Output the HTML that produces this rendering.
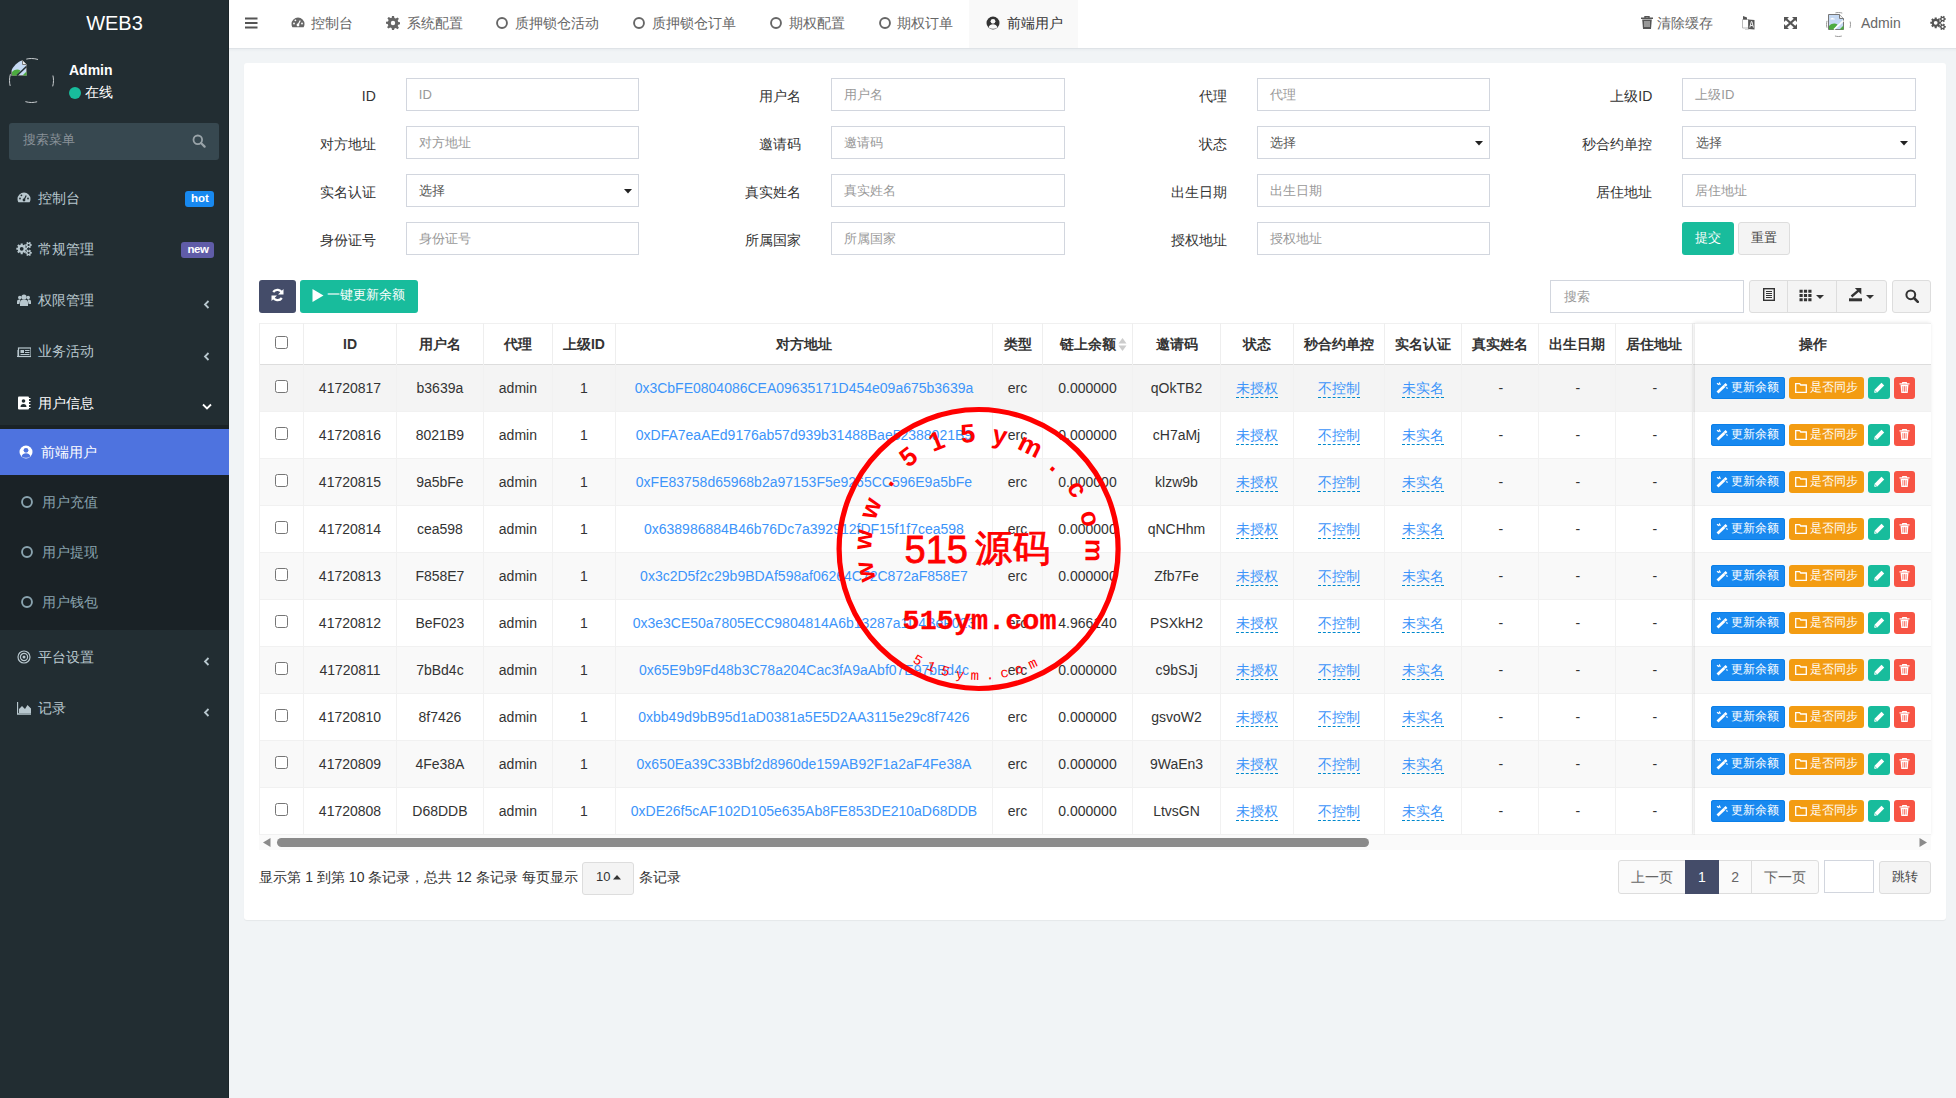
<!DOCTYPE html>
<html><head><meta charset="utf-8"><title>前端用户</title>
<style>
html,body{margin:0;padding:0;}
body{width:1956px;height:1098px;overflow:hidden;position:relative;background:#f1f4f6;font-family:"Liberation Sans",sans-serif;}
.b{position:absolute;}
.t{position:absolute;white-space:nowrap;}
.cb{width:13px;height:13px;border:1px solid #767676;border-radius:2.5px;box-sizing:border-box;background:#fff;}
.ed{border-bottom:1px dashed #0088cc;padding-bottom:1px;}
</style></head><body>
<div class="b" style="left:0px;top:0px;width:229px;height:1098px;background:#222d32;"></div>
<div class="b" style="left:228px;top:0px;width:1px;height:1098px;background:#1c2529;"></div>
<div class="t" style="left:0px;top:11.60px;font-size:20px;line-height:22.34px;color:#fff;font-weight:normal;width:229px;text-align:center;">WEB3</div>
<svg class="b" style="left:9px;top:58px" width="45" height="45" viewBox="0 0 45 45"><defs><clipPath id="av"><circle cx="22.5" cy="22.5" r="22.5"/></clipPath></defs><g clip-path="url(#av)"><g transform="translate(2 2)"><path d="M.5 .5h11l4 4v11H.5z" fill="#c5d9f3" stroke="#777" stroke-width="1"/><path d="M11.5 .5v4h4" fill="#eee" stroke="#777" stroke-width="1"/><path d="M1 15.5V12c3-3 6-3 8.5-1.5L6 15.5z" fill="#4cab3f"/><path d="M11.5 15.5l4-4v4z" fill="#4cab3f"/><path d="M6 15.5l9.5-9" stroke="#222d32" stroke-width="1.6"/></g></g><circle cx="22.5" cy="22.5" r="22" fill="none" stroke="#c8cccf" stroke-width="1" stroke-dasharray="12 22.56" stroke-dashoffset="6"/></svg>
<div class="t" style="left:69px;top:63.33px;font-size:14px;line-height:15.64px;color:#fff;font-weight:bold;">Admin</div>
<div class="b" style="left:69px;top:87px;width:12px;height:12px;background:#18bc9c;border-radius:50%;"></div>
<div class="t" style="left:85px;top:84.83px;font-size:14px;line-height:15.64px;color:#fff;font-weight:normal;">在线</div>
<div class="b" style="left:9px;top:123px;width:210px;height:37px;background:#374850;border-radius:3px;"></div>
<div class="t" style="left:23px;top:133.24px;font-size:13px;line-height:14.52px;color:#8a9299;font-weight:normal;">搜索菜单</div>
<svg class="b" style="left:192px;top:134px" width="14" height="14" viewBox="0 0 14 14"><circle cx="5.8" cy="5.8" r="4.3" fill="none" stroke="#9aa4a9" stroke-width="1.8"/><path d="M9 9l3.6 3.6" stroke="#9aa4a9" stroke-width="2.2" stroke-linecap="round"/></svg>
<svg class="b" style="left:17px;top:191px" width="14" height="14" viewBox="0 0 14 14"><path d="M7 1.5a6.5 6.5 0 0 0-6.5 6.5c0 1.2.3 2.3.9 3.3h11.2c.6-1 .9-2.1.9-3.3A6.5 6.5 0 0 0 7 1.5z" fill="#b8c7ce"/><circle cx="7" cy="9" r="1.4" fill="#222d32"/><path d="M7 9l2.2-4.5" stroke="#222d32" stroke-width="1.2"/><circle cx="3" cy="7.5" r=".9" fill="#222d32"/><circle cx="4.4" cy="4.3" r=".9" fill="#222d32"/><circle cx="11" cy="7.5" r=".9" fill="#222d32"/></svg>
<div class="t" style="left:38px;top:190.73px;font-size:14px;line-height:15.64px;color:#b8c7ce;font-weight:normal;">控制台</div>
<div class="b" style="left:185px;top:191px;width:29px;height:16px;background:#1889f0;border-radius:3px;"></div>
<div class="t" style="left:185.5px;top:191.89px;font-size:11.5px;line-height:12.85px;color:#fff;font-weight:bold;width:29px;text-align:center;">hot</div>
<svg class="b" style="left:16px;top:241px" width="16" height="16" viewBox="0 0 16 16"><path fill-rule="evenodd" fill="#b8c7ce" d="M9.66 6.75 L11.09 6.73 L11.09 8.87 L9.66 8.85 L9.25 9.86 L10.27 10.86 L8.76 12.37 L7.76 11.35 L6.75 11.76 L6.77 13.19 L4.63 13.19 L4.65 11.76 L3.64 11.35 L2.64 12.37 L1.13 10.86 L2.15 9.86 L1.74 8.85 L0.31 8.87 L0.31 6.73 L1.74 6.75 L2.15 5.74 L1.13 4.74 L2.64 3.23 L3.64 4.25 L4.65 3.84 L4.63 2.41 L6.77 2.41 L6.75 3.84 L7.76 4.25 L8.76 3.23 L10.27 4.74 L9.25 5.74Z M7.60 7.80 A1.9 1.9 0 1 0 3.80 7.80 A1.9 1.9 0 1 0 7.60 7.80Z M14.86 3.19 L15.79 3.15 L15.79 4.85 L14.86 4.81 L14.43 5.55 L14.93 6.33 L13.45 7.19 L13.03 6.36 L12.17 6.36 L11.75 7.19 L10.27 6.33 L10.77 5.55 L10.34 4.81 L9.41 4.85 L9.41 3.15 L10.34 3.19 L10.77 2.45 L10.27 1.67 L11.75 0.81 L12.17 1.64 L13.03 1.64 L13.45 0.81 L14.93 1.67 L14.43 2.45Z M13.70 4.00 A1.1 1.1 0 1 0 11.50 4.00 A1.1 1.1 0 1 0 13.70 4.00Z M14.86 10.99 L15.79 10.95 L15.79 12.65 L14.86 12.61 L14.43 13.35 L14.93 14.13 L13.45 14.99 L13.03 14.16 L12.17 14.16 L11.75 14.99 L10.27 14.13 L10.77 13.35 L10.34 12.61 L9.41 12.65 L9.41 10.95 L10.34 10.99 L10.77 10.25 L10.27 9.47 L11.75 8.61 L12.17 9.44 L13.03 9.44 L13.45 8.61 L14.93 9.47 L14.43 10.25Z M13.70 11.80 A1.1 1.1 0 1 0 11.50 11.80 A1.1 1.1 0 1 0 13.70 11.80Z"/></svg>
<div class="t" style="left:38px;top:241.98px;font-size:14px;line-height:15.64px;color:#b8c7ce;font-weight:normal;">常规管理</div>
<div class="b" style="left:181px;top:242px;width:33px;height:16px;background:#605ca8;border-radius:3px;"></div>
<div class="t" style="left:181.5px;top:242.89px;font-size:11.5px;line-height:12.85px;color:#fff;font-weight:bold;width:33px;text-align:center;letter-spacing:-0.4px;">new</div>
<svg class="b" style="left:17px;top:293px" width="14" height="14" viewBox="0 0 14 14"><circle cx="7" cy="4" r="2.6" fill="#b8c7ce"/><circle cx="2.8" cy="4.6" r="1.8" fill="#b8c7ce"/><circle cx="11.2" cy="4.6" r="1.8" fill="#b8c7ce"/><path d="M3 13v-3.5c0-1.8 1.5-3 4-3s4 1.2 4 3V13z" fill="#b8c7ce"/><path d="M0 11V8.6c0-1.3.9-2 2.4-2h1L2.4 11z" fill="#b8c7ce"/><path d="M14 11V8.6c0-1.3-.9-2-2.4-2h-1l1 4.4z" fill="#b8c7ce"/></svg>
<div class="t" style="left:38px;top:293.23px;font-size:14px;line-height:15.64px;color:#b8c7ce;font-weight:normal;">权限管理</div>
<svg class="b" style="left:203px;top:300px" width="7" height="9" viewBox="0 0 7 9"><path d="M5.5 1L2 4.5 5.5 8" fill="none" stroke="#b8c7ce" stroke-width="1.8"/></svg>
<svg class="b" style="left:17px;top:345px" width="14" height="14" viewBox="0 0 14 14"><rect x="1.5" y="3" width="12.5" height="8.5" fill="none" stroke="#b8c7ce" stroke-width="1.2"/><path d="M0 5v6.5h1.5" fill="none" stroke="#b8c7ce" stroke-width="1.1"/><rect x="3.5" y="5" width="3.5" height="3" fill="#b8c7ce"/><path d="M8 5.5h4.5M8 7.5h4.5M3.5 9.5h9" stroke="#b8c7ce" stroke-width="1"/></svg>
<div class="t" style="left:38px;top:344.48px;font-size:14px;line-height:15.64px;color:#b8c7ce;font-weight:normal;">业务活动</div>
<svg class="b" style="left:203px;top:352px" width="7" height="9" viewBox="0 0 7 9"><path d="M5.5 1L2 4.5 5.5 8" fill="none" stroke="#b8c7ce" stroke-width="1.8"/></svg>
<svg class="b" style="left:17px;top:396px" width="14" height="14" viewBox="0 0 14 14"><rect x="1" y="0.5" width="11" height="13" rx="1" fill="#fff"/><path d="M12 2.5h1.5M12 5.5h1.5M12 8.5h1.5M12 11.5h1.5" stroke="#fff" stroke-width="1.2"/><circle cx="6.5" cy="5" r="1.8" fill="#222d32"/><path d="M3.5 11c0-2 1.2-3 3-3s3 1 3 3z" fill="#222d32"/></svg>
<div class="t" style="left:38px;top:395.73px;font-size:14px;line-height:15.64px;color:#fff;font-weight:normal;">用户信息</div>
<svg class="b" style="left:202px;top:403px" width="10" height="7" viewBox="0 0 10 7"><path d="M1 1.5l4 4 4-4" fill="none" stroke="#fff" stroke-width="1.8"/></svg>
<div class="b" style="left:0px;top:425px;width:229px;height:204.8px;background:#1a2226;"></div>
<div class="b" style="left:0px;top:428.7px;width:229px;height:46.2px;background:#4e73df;"></div>
<svg class="b" style="left:19px;top:445px" width="14" height="14" viewBox="0 0 14 14"><circle cx="7" cy="7" r="6.5" fill="#fff"/><circle cx="7" cy="5.3" r="2.4" fill="#4e73df"/><path d="M2.5 11.2c.8-2 2.4-3 4.5-3s3.7 1 4.5 3A5.4 5.4 0 0 1 7 12.8a5.4 5.4 0 0 1-4.5-1.6z" fill="#4e73df"/></svg>
<div class="t" style="left:41px;top:444.73px;font-size:14px;line-height:15.64px;color:#fff;font-weight:normal;">前端用户</div>
<svg class="b" style="left:21px;top:496px" width="12" height="12" viewBox="0 0 12 12"><circle cx="6" cy="6" r="4.95" fill="none" stroke="#8aa4af" stroke-width="1.9"/></svg>
<div class="t" style="left:41.5px;top:494.93px;font-size:14px;line-height:15.64px;color:#8aa4af;font-weight:normal;">用户充值</div>
<svg class="b" style="left:21px;top:546px" width="12" height="12" viewBox="0 0 12 12"><circle cx="6" cy="6" r="4.95" fill="none" stroke="#8aa4af" stroke-width="1.9"/></svg>
<div class="t" style="left:41.5px;top:545.13px;font-size:14px;line-height:15.64px;color:#8aa4af;font-weight:normal;">用户提现</div>
<svg class="b" style="left:21px;top:596px" width="12" height="12" viewBox="0 0 12 12"><circle cx="6" cy="6" r="4.95" fill="none" stroke="#8aa4af" stroke-width="1.9"/></svg>
<div class="t" style="left:41.5px;top:595.33px;font-size:14px;line-height:15.64px;color:#8aa4af;font-weight:normal;">用户钱包</div>
<svg class="b" style="left:17px;top:650px" width="14" height="14" viewBox="0 0 14 14"><circle cx="7" cy="7" r="6" fill="none" stroke="#b8c7ce" stroke-width="1.2"/><circle cx="7" cy="7" r="3.6" fill="none" stroke="#b8c7ce" stroke-width="1.2"/><circle cx="7" cy="7" r="1.5" fill="#b8c7ce"/></svg>
<div class="t" style="left:38px;top:650.13px;font-size:14px;line-height:15.64px;color:#b8c7ce;font-weight:normal;">平台设置</div>
<svg class="b" style="left:203px;top:657px" width="7" height="9" viewBox="0 0 7 9"><path d="M5.5 1L2 4.5 5.5 8" fill="none" stroke="#b8c7ce" stroke-width="1.8"/></svg>
<svg class="b" style="left:17px;top:701px" width="14" height="14" viewBox="0 0 14 14"><path d="M.5 1v12h14" fill="none" stroke="#b8c7ce" stroke-width="1.3"/><path d="M2 12V8l3-3 3 3 2.5-4L14 7.5V12z" fill="#b8c7ce"/></svg>
<div class="t" style="left:38px;top:701.38px;font-size:14px;line-height:15.64px;color:#b8c7ce;font-weight:normal;">记录</div>
<svg class="b" style="left:203px;top:708px" width="7" height="9" viewBox="0 0 7 9"><path d="M5.5 1L2 4.5 5.5 8" fill="none" stroke="#b8c7ce" stroke-width="1.8"/></svg>
<div class="b" style="left:229px;top:0px;width:1727px;height:48px;background:#fff;"></div>
<div class="b" style="left:229px;top:48px;width:1727px;height:1px;background:#dfe3e7;"></div>
<div class="b" style="left:229px;top:49px;width:1727px;height:3px;background:linear-gradient(#e9edf0,#f1f4f6);"></div>
<svg class="b" style="left:245px;top:17px" width="13" height="12" viewBox="0 0 13 12"><path d="M0 1.5h12.5M0 6h12.5M0 10.5h12.5" stroke="#555" stroke-width="2"/></svg>
<div class="b" style="left:969px;top:0px;width:109px;height:48px;background:#f9f9f9;"></div>
<svg class="b" style="left:291px;top:16px" width="14" height="14" viewBox="0 0 14 14"><path d="M7 1.5a6.5 6.5 0 0 0-6.5 6.5c0 1.2.3 2.3.9 3.3h11.2c.6-1 .9-2.1.9-3.3A6.5 6.5 0 0 0 7 1.5z" fill="#666"/><circle cx="7" cy="9" r="1.4" fill="#fff"/><path d="M7 9l2.2-4.5" stroke="#fff" stroke-width="1.2"/><circle cx="3" cy="7.5" r=".9" fill="#fff"/><circle cx="4.4" cy="4.3" r=".9" fill="#fff"/><circle cx="11" cy="7.5" r=".9" fill="#fff"/></svg>
<div class="t" style="left:311.4px;top:15.83px;font-size:14px;line-height:15.64px;color:#666;font-weight:normal;">控制台</div>
<svg class="b" style="left:386px;top:16px" width="14" height="14" viewBox="0 0 14 14"><path d="M6 0h2l.4 2 1.4.6 1.7-1.2 1.4 1.4-1.2 1.7.6 1.4 2 .4v2l-2 .4-.6 1.4 1.2 1.7-1.4 1.4-1.7-1.2-1.4.6L8 14H6l-.4-2-1.4-.6-1.7 1.2-1.4-1.4 1.2-1.7L1.7 8 0 7.8v-2l2-.4.6-1.4-1.2-1.7 1.4-1.4 1.7 1.2L5.6 2z" fill="#666"/><circle cx="7" cy="7" r="2.2" fill="#fff"/></svg>
<div class="t" style="left:406.5px;top:15.83px;font-size:14px;line-height:15.64px;color:#666;font-weight:normal;">系统配置</div>
<svg class="b" style="left:496px;top:17px" width="12" height="12" viewBox="0 0 12 12"><circle cx="6" cy="6" r="4.95" fill="none" stroke="#666" stroke-width="1.9"/></svg>
<div class="t" style="left:515px;top:15.83px;font-size:14px;line-height:15.64px;color:#666;font-weight:normal;">质押锁仓活动</div>
<svg class="b" style="left:633px;top:17px" width="12" height="12" viewBox="0 0 12 12"><circle cx="6" cy="6" r="4.95" fill="none" stroke="#666" stroke-width="1.9"/></svg>
<div class="t" style="left:652px;top:15.83px;font-size:14px;line-height:15.64px;color:#666;font-weight:normal;">质押锁仓订单</div>
<svg class="b" style="left:770px;top:17px" width="12" height="12" viewBox="0 0 12 12"><circle cx="6" cy="6" r="4.95" fill="none" stroke="#666" stroke-width="1.9"/></svg>
<div class="t" style="left:788.8px;top:15.83px;font-size:14px;line-height:15.64px;color:#666;font-weight:normal;">期权配置</div>
<svg class="b" style="left:879px;top:17px" width="12" height="12" viewBox="0 0 12 12"><circle cx="6" cy="6" r="4.95" fill="none" stroke="#666" stroke-width="1.9"/></svg>
<div class="t" style="left:897px;top:15.83px;font-size:14px;line-height:15.64px;color:#666;font-weight:normal;">期权订单</div>
<svg class="b" style="left:986px;top:16px" width="14" height="14" viewBox="0 0 14 14"><circle cx="7" cy="7" r="6.5" fill="#333"/><circle cx="7" cy="5.3" r="2.4" fill="#f9f9f9"/><path d="M2.5 11.2c.8-2 2.4-3 4.5-3s3.7 1 4.5 3A5.4 5.4 0 0 1 7 12.8a5.4 5.4 0 0 1-4.5-1.6z" fill="#f9f9f9"/></svg>
<div class="t" style="left:1007px;top:15.83px;font-size:14px;line-height:15.64px;color:#333;font-weight:normal;">前端用户</div>
<svg class="b" style="left:1641px;top:16px" width="12" height="13" viewBox="0 0 12 13"><path d="M0 2.2h12M4 2V.6h4V2" fill="none" stroke="#555" stroke-width="1.4"/><path d="M1.2 3.5h9.6L10 13H2z" fill="#555"/><path d="M4 5v6M6 5v6M8 5v6" stroke="#fff" stroke-width=".8"/></svg>
<div class="t" style="left:1656.7px;top:15.83px;font-size:14px;line-height:15.64px;color:#666;font-weight:normal;">清除缓存</div>
<svg class="b" style="left:1742px;top:16px" width="13" height="14" viewBox="0 0 13 14"><path d="M.5 3.5h6v8.5H.5z" fill="#fff" stroke="#bbb" stroke-width="1"/><path d="M1 0l4 1.5v2H1z" fill="#555"/><path d="M6.2 3.5L12.5 4v9.5L6.2 13z" fill="#555"/><path d="M7.8 11.5l1.5-6h.6l1.5 6M8.5 9.5h2.3" stroke="#fff" stroke-width=".9" fill="none"/><path d="M3 13.5h4" stroke="#ccc" stroke-width=".8"/></svg>
<svg class="b" style="left:1784px;top:17px" width="13" height="12" viewBox="0 0 13 12"><path d="M0 0h5L0 5zM13 0H8l5 5zM0 12h5L0 7zM13 12H8l5-5z" fill="#555"/><path d="M1.5 1.5l10 9M11.5 1.5l-10 9" stroke="#555" stroke-width="2.3"/></svg>
<svg class="b" style="left:1826px;top:12px" width="25" height="25" viewBox="0 0 25 25"><circle cx="12.5" cy="12.5" r="12" fill="none" stroke="#999" stroke-width="1" stroke-dasharray="7 11.85" stroke-dashoffset="3.5"/></svg>
<svg class="b" style="left:1828px;top:14px" width="16" height="16" viewBox="0 0 16 16"><path d="M.5 .5h11l4 4v11H.5z" fill="#c5d9f3" stroke="#777" stroke-width="1"/><path d="M11.5 .5v4h4" fill="#eee" stroke="#777" stroke-width="1"/><path d="M3 4.5c.5-1 2-1 2.5 0 .8-.3 1.5.3 1.3 1H2.5c-.3-.6 0-1 .5-1z" fill="#fff"/><path d="M1 15.5V12c3-3 6-3 8.5-1.5L6 15.5z" fill="#4cab3f"/><path d="M11.5 15.5l4-4v4z" fill="#4cab3f"/><path d="M6 15.5l9.5-9" stroke="#fff" stroke-width="1.6"/></svg>
<div class="t" style="left:1861px;top:15.83px;font-size:14px;line-height:15.64px;color:#666;font-weight:normal;">Admin</div>
<svg class="b" style="left:1930px;top:15px" width="16" height="16" viewBox="0 0 16 16"><path fill-rule="evenodd" fill="#555" d="M9.66 6.75 L11.09 6.73 L11.09 8.87 L9.66 8.85 L9.25 9.86 L10.27 10.86 L8.76 12.37 L7.76 11.35 L6.75 11.76 L6.77 13.19 L4.63 13.19 L4.65 11.76 L3.64 11.35 L2.64 12.37 L1.13 10.86 L2.15 9.86 L1.74 8.85 L0.31 8.87 L0.31 6.73 L1.74 6.75 L2.15 5.74 L1.13 4.74 L2.64 3.23 L3.64 4.25 L4.65 3.84 L4.63 2.41 L6.77 2.41 L6.75 3.84 L7.76 4.25 L8.76 3.23 L10.27 4.74 L9.25 5.74Z M7.60 7.80 A1.9 1.9 0 1 0 3.80 7.80 A1.9 1.9 0 1 0 7.60 7.80Z M14.86 3.19 L15.79 3.15 L15.79 4.85 L14.86 4.81 L14.43 5.55 L14.93 6.33 L13.45 7.19 L13.03 6.36 L12.17 6.36 L11.75 7.19 L10.27 6.33 L10.77 5.55 L10.34 4.81 L9.41 4.85 L9.41 3.15 L10.34 3.19 L10.77 2.45 L10.27 1.67 L11.75 0.81 L12.17 1.64 L13.03 1.64 L13.45 0.81 L14.93 1.67 L14.43 2.45Z M13.70 4.00 A1.1 1.1 0 1 0 11.50 4.00 A1.1 1.1 0 1 0 13.70 4.00Z M14.86 10.99 L15.79 10.95 L15.79 12.65 L14.86 12.61 L14.43 13.35 L14.93 14.13 L13.45 14.99 L13.03 14.16 L12.17 14.16 L11.75 14.99 L10.27 14.13 L10.77 13.35 L10.34 12.61 L9.41 12.65 L9.41 10.95 L10.34 10.99 L10.77 10.25 L10.27 9.47 L11.75 8.61 L12.17 9.44 L13.03 9.44 L13.45 8.61 L14.93 9.47 L14.43 10.25Z M13.70 11.80 A1.1 1.1 0 1 0 11.50 11.80 A1.1 1.1 0 1 0 13.70 11.80Z"/></svg>
<div class="b" style="left:244px;top:63px;width:1702px;height:857px;background:#fff;border-radius:3px;box-shadow:0 1px 1px rgba(0,0,0,0.05);"></div>
<div class="t" style="left:175.82999999999998px;top:89.33px;font-size:14px;line-height:15.64px;color:#333;font-weight:normal;width:200px;text-align:right;">ID</div>
<div class="b" style="left:405.83px;top:78px;width:233.67px;height:33px;border:1px solid #d2d6de;box-sizing:border-box;background:#fff;"></div>
<div class="t" style="left:418.83px;top:87.73px;font-size:13px;line-height:14.52px;color:#999;font-weight:normal;">ID</div>
<div class="t" style="left:601.3299999999999px;top:89.33px;font-size:14px;line-height:15.64px;color:#333;font-weight:normal;width:200px;text-align:right;">用户名</div>
<div class="b" style="left:831.33px;top:78px;width:233.67px;height:33px;border:1px solid #d2d6de;box-sizing:border-box;background:#fff;"></div>
<div class="t" style="left:844.3299999999999px;top:87.73px;font-size:13px;line-height:14.52px;color:#999;font-weight:normal;">用户名</div>
<div class="t" style="left:1026.83px;top:89.33px;font-size:14px;line-height:15.64px;color:#333;font-weight:normal;width:200px;text-align:right;">代理</div>
<div class="b" style="left:1256.83px;top:78px;width:233.67px;height:33px;border:1px solid #d2d6de;box-sizing:border-box;background:#fff;"></div>
<div class="t" style="left:1269.83px;top:87.73px;font-size:13px;line-height:14.52px;color:#999;font-weight:normal;">代理</div>
<div class="t" style="left:1452.33px;top:89.33px;font-size:14px;line-height:15.64px;color:#333;font-weight:normal;width:200px;text-align:right;">上级ID</div>
<div class="b" style="left:1682.33px;top:78px;width:233.67px;height:33px;border:1px solid #d2d6de;box-sizing:border-box;background:#fff;"></div>
<div class="t" style="left:1695.33px;top:87.73px;font-size:13px;line-height:14.52px;color:#999;font-weight:normal;">上级ID</div>
<div class="t" style="left:175.82999999999998px;top:137.33px;font-size:14px;line-height:15.64px;color:#333;font-weight:normal;width:200px;text-align:right;">对方地址</div>
<div class="b" style="left:405.83px;top:126px;width:233.67px;height:33px;border:1px solid #d2d6de;box-sizing:border-box;background:#fff;"></div>
<div class="t" style="left:418.83px;top:135.74px;font-size:13px;line-height:14.52px;color:#999;font-weight:normal;">对方地址</div>
<div class="t" style="left:601.3299999999999px;top:137.33px;font-size:14px;line-height:15.64px;color:#333;font-weight:normal;width:200px;text-align:right;">邀请码</div>
<div class="b" style="left:831.33px;top:126px;width:233.67px;height:33px;border:1px solid #d2d6de;box-sizing:border-box;background:#fff;"></div>
<div class="t" style="left:844.3299999999999px;top:135.74px;font-size:13px;line-height:14.52px;color:#999;font-weight:normal;">邀请码</div>
<div class="t" style="left:1026.83px;top:137.33px;font-size:14px;line-height:15.64px;color:#333;font-weight:normal;width:200px;text-align:right;">状态</div>
<div class="b" style="left:1256.83px;top:126px;width:233.67px;height:33px;border:1px solid #d2d6de;box-sizing:border-box;background:#fff;"></div>
<div class="t" style="left:1270.33px;top:135.74px;font-size:13px;line-height:14.52px;color:#555;font-weight:normal;">选择</div>
<svg class="b" style="left:1474.83px;top:141px" width="8" height="5" viewBox="0 0 8 5"><path d="M0 0h8L4 4.5z" fill="#222"/></svg>
<div class="t" style="left:1452.33px;top:137.33px;font-size:14px;line-height:15.64px;color:#333;font-weight:normal;width:200px;text-align:right;">秒合约单控</div>
<div class="b" style="left:1682.33px;top:126px;width:233.67px;height:33px;border:1px solid #d2d6de;box-sizing:border-box;background:#fff;"></div>
<div class="t" style="left:1695.83px;top:135.74px;font-size:13px;line-height:14.52px;color:#555;font-weight:normal;">选择</div>
<svg class="b" style="left:1900.33px;top:141px" width="8" height="5" viewBox="0 0 8 5"><path d="M0 0h8L4 4.5z" fill="#222"/></svg>
<div class="t" style="left:175.82999999999998px;top:185.33px;font-size:14px;line-height:15.64px;color:#333;font-weight:normal;width:200px;text-align:right;">实名认证</div>
<div class="b" style="left:405.83px;top:174px;width:233.67px;height:33px;border:1px solid #d2d6de;box-sizing:border-box;background:#fff;"></div>
<div class="t" style="left:419.33px;top:183.74px;font-size:13px;line-height:14.52px;color:#555;font-weight:normal;">选择</div>
<svg class="b" style="left:623.83px;top:189px" width="8" height="5" viewBox="0 0 8 5"><path d="M0 0h8L4 4.5z" fill="#222"/></svg>
<div class="t" style="left:601.3299999999999px;top:185.33px;font-size:14px;line-height:15.64px;color:#333;font-weight:normal;width:200px;text-align:right;">真实姓名</div>
<div class="b" style="left:831.33px;top:174px;width:233.67px;height:33px;border:1px solid #d2d6de;box-sizing:border-box;background:#fff;"></div>
<div class="t" style="left:844.3299999999999px;top:183.74px;font-size:13px;line-height:14.52px;color:#999;font-weight:normal;">真实姓名</div>
<div class="t" style="left:1026.83px;top:185.33px;font-size:14px;line-height:15.64px;color:#333;font-weight:normal;width:200px;text-align:right;">出生日期</div>
<div class="b" style="left:1256.83px;top:174px;width:233.67px;height:33px;border:1px solid #d2d6de;box-sizing:border-box;background:#fff;"></div>
<div class="t" style="left:1269.83px;top:183.74px;font-size:13px;line-height:14.52px;color:#999;font-weight:normal;">出生日期</div>
<div class="t" style="left:1452.33px;top:185.33px;font-size:14px;line-height:15.64px;color:#333;font-weight:normal;width:200px;text-align:right;">居住地址</div>
<div class="b" style="left:1682.33px;top:174px;width:233.67px;height:33px;border:1px solid #d2d6de;box-sizing:border-box;background:#fff;"></div>
<div class="t" style="left:1695.33px;top:183.74px;font-size:13px;line-height:14.52px;color:#999;font-weight:normal;">居住地址</div>
<div class="t" style="left:175.82999999999998px;top:233.33px;font-size:14px;line-height:15.64px;color:#333;font-weight:normal;width:200px;text-align:right;">身份证号</div>
<div class="b" style="left:405.83px;top:222px;width:233.67px;height:33px;border:1px solid #d2d6de;box-sizing:border-box;background:#fff;"></div>
<div class="t" style="left:418.83px;top:231.74px;font-size:13px;line-height:14.52px;color:#999;font-weight:normal;">身份证号</div>
<div class="t" style="left:601.3299999999999px;top:233.33px;font-size:14px;line-height:15.64px;color:#333;font-weight:normal;width:200px;text-align:right;">所属国家</div>
<div class="b" style="left:831.33px;top:222px;width:233.67px;height:33px;border:1px solid #d2d6de;box-sizing:border-box;background:#fff;"></div>
<div class="t" style="left:844.3299999999999px;top:231.74px;font-size:13px;line-height:14.52px;color:#999;font-weight:normal;">所属国家</div>
<div class="t" style="left:1026.83px;top:233.33px;font-size:14px;line-height:15.64px;color:#333;font-weight:normal;width:200px;text-align:right;">授权地址</div>
<div class="b" style="left:1256.83px;top:222px;width:233.67px;height:33px;border:1px solid #d2d6de;box-sizing:border-box;background:#fff;"></div>
<div class="t" style="left:1269.83px;top:231.74px;font-size:13px;line-height:14.52px;color:#999;font-weight:normal;">授权地址</div>
<div class="b" style="left:1682px;top:222px;width:52px;height:33px;background:#18bc9c;border-radius:3px;"></div>
<div class="t" style="left:1682px;top:231.24px;font-size:13px;line-height:14.52px;color:#fff;font-weight:normal;width:52px;text-align:center;">提交</div>
<div class="b" style="left:1738px;top:222px;width:52px;height:33px;background:#f4f4f4;border:1px solid #ddd;border-radius:3px;box-sizing:border-box;"></div>
<div class="t" style="left:1738px;top:231.24px;font-size:13px;line-height:14.52px;color:#444;font-weight:normal;width:52px;text-align:center;">重置</div>
<div class="b" style="left:259px;top:280px;width:37px;height:33px;background:#444c69;border-radius:3px;"></div>
<svg class="b" style="left:271px;top:288px" width="13" height="14" viewBox="0 0 13 14"><path d="M11 5.2A5 5 0 0 0 2.2 4" fill="none" stroke="#fff" stroke-width="2.2"/><path d="M12.5 1v5.5H7z" fill="#fff"/><path d="M2 8.8A5 5 0 0 0 10.8 10" fill="none" stroke="#fff" stroke-width="2.2"/><path d="M.5 13V7.5H6z" fill="#fff"/></svg>
<div class="b" style="left:300px;top:280px;width:118px;height:33px;background:#18bc9c;border-radius:3px;"></div>
<svg class="b" style="left:312px;top:289px" width="12" height="13" viewBox="0 0 12 13"><path d="M.5 0L11.5 6.5.5 13z" fill="#fff"/></svg>
<div class="t" style="left:326.5px;top:288.24px;font-size:13px;line-height:14.52px;color:#fff;font-weight:normal;">一键更新余额</div>
<div class="b" style="left:1550px;top:280px;width:194px;height:33px;border:1px solid #d2d6de;box-sizing:border-box;background:#fff;"></div>
<div class="t" style="left:1563.5px;top:289.74px;font-size:13px;line-height:14.52px;color:#999;font-weight:normal;">搜索</div>
<div class="b" style="left:1749px;top:280px;width:138px;height:33px;background:#f4f4f4;border:1px solid #ddd;border-radius:3px;box-sizing:border-box;"></div>
<div class="b" style="left:1787px;top:281px;width:1px;height:31px;background:#ddd;"></div>
<div class="b" style="left:1836px;top:281px;width:1px;height:31px;background:#ddd;"></div>
<div class="b" style="left:1892px;top:280px;width:39px;height:33px;background:#f4f4f4;border:1px solid #ddd;border-radius:3px;box-sizing:border-box;"></div>
<svg class="b" style="left:1763px;top:288px" width="12" height="13" viewBox="0 0 12 13"><rect x=".7" y=".7" width="10.6" height="11.6" fill="none" stroke="#333" stroke-width="1.4"/><path d="M3 3.5h6M3 5.5h6M3 7.5h6M3 9.5h6" stroke="#333" stroke-width="1.1"/></svg>
<svg class="b" style="left:1799px;top:289px" width="26" height="13" viewBox="0 0 26 13"><path d="M.5 .8h3.2v3H.5zM4.9 .8h3.2v3H4.9zM9.3 .8h3.2v3H9.3zM.5 4.9h3.2v3.2H.5zM4.9 4.9h3.2v3.2H4.9zM9.3 4.9h3.2v3.2H9.3zM.5 9.2h3.2v3H.5zM4.9 9.2h3.2v3H4.9zM9.3 9.2h3.2v3H9.3z" fill="#333"/><path d="M17 6h8l-4 4z" fill="#333"/></svg>
<svg class="b" style="left:1848px;top:287px" width="27" height="15" viewBox="0 0 27 15"><path d="M1 11.3h13v3H1z" fill="#333"/><path d="M3.5 9.5L11 3.2" stroke="#333" stroke-width="2.4"/><path d="M6.8 1h6.5v6.5z" fill="#333"/><path d="M18 8h8l-4 4z" fill="#333"/></svg>
<svg class="b" style="left:1905px;top:289px" width="14" height="14" viewBox="0 0 14 14"><circle cx="5.8" cy="5.8" r="4.4" fill="none" stroke="#333" stroke-width="2"/><path d="M9 9l3.8 3.8" stroke="#333" stroke-width="2.6" stroke-linecap="round"/></svg>
<div class="b" style="left:259px;top:323px;width:1672px;height:512px;background:#fff;"></div>
<div class="t" style="left:303.5px;top:337.33px;font-size:14px;line-height:15.64px;color:#333;font-weight:bold;width:93.0px;text-align:center;">ID</div>
<div class="t" style="left:396.5px;top:337.33px;font-size:14px;line-height:15.64px;color:#333;font-weight:bold;width:86.80000000000001px;text-align:center;">用户名</div>
<div class="t" style="left:483.3px;top:337.33px;font-size:14px;line-height:15.64px;color:#333;font-weight:bold;width:69.19999999999999px;text-align:center;">代理</div>
<div class="t" style="left:552.5px;top:337.33px;font-size:14px;line-height:15.64px;color:#333;font-weight:bold;width:62.89999999999998px;text-align:center;">上级ID</div>
<div class="t" style="left:615.4px;top:337.33px;font-size:14px;line-height:15.64px;color:#333;font-weight:bold;width:377.1px;text-align:center;">对方地址</div>
<div class="t" style="left:992.5px;top:337.33px;font-size:14px;line-height:15.64px;color:#333;font-weight:bold;width:50.0px;text-align:center;">类型</div>
<div class="t" style="left:1042.5px;top:337.33px;font-size:14px;line-height:15.64px;color:#333;font-weight:bold;width:90.0px;text-align:center;">链上余额</div>
<div class="t" style="left:1132.5px;top:337.33px;font-size:14px;line-height:15.64px;color:#333;font-weight:bold;width:88.0px;text-align:center;">邀请码</div>
<div class="t" style="left:1220.5px;top:337.33px;font-size:14px;line-height:15.64px;color:#333;font-weight:bold;width:73.0px;text-align:center;">状态</div>
<div class="t" style="left:1293.5px;top:337.33px;font-size:14px;line-height:15.64px;color:#333;font-weight:bold;width:91.0px;text-align:center;">秒合约单控</div>
<div class="t" style="left:1384.5px;top:337.33px;font-size:14px;line-height:15.64px;color:#333;font-weight:bold;width:76.79999999999995px;text-align:center;">实名认证</div>
<div class="t" style="left:1461.3px;top:337.33px;font-size:14px;line-height:15.64px;color:#333;font-weight:bold;width:77.10000000000014px;text-align:center;">真实姓名</div>
<div class="t" style="left:1538.4px;top:337.33px;font-size:14px;line-height:15.64px;color:#333;font-weight:bold;width:77.09999999999991px;text-align:center;">出生日期</div>
<div class="t" style="left:1615.5px;top:337.33px;font-size:14px;line-height:15.64px;color:#333;font-weight:bold;width:76.90000000000009px;text-align:center;">居住地址</div>
<svg class="b" style="left:1118px;top:337px" width="9" height="15" viewBox="0 0 9 15"><path d="M4.5 1L8.5 6.5H.5z" fill="#ccc"/><path d="M4.5 14L8.5 8.5H.5z" fill="#ccc"/></svg>
<div class="b cb" style="left:275px;top:336px;"></div>
<div class="b" style="left:259px;top:365px;width:1672px;height:46px;background:#f4f4f4;"></div>
<div class="b" style="left:259px;top:411px;width:1672px;height:1px;background:#f1f1f1;"></div>
<div class="b cb" style="left:275px;top:380px;"></div>
<div class="t" style="left:303.5px;top:381.33px;font-size:14px;line-height:15.64px;color:#333;font-weight:normal;width:93.0px;text-align:center;">41720817</div>
<div class="t" style="left:396.5px;top:381.33px;font-size:14px;line-height:15.64px;color:#333;font-weight:normal;width:86.80000000000001px;text-align:center;">b3639a</div>
<div class="t" style="left:483.3px;top:381.33px;font-size:14px;line-height:15.64px;color:#333;font-weight:normal;width:69.19999999999999px;text-align:center;">admin</div>
<div class="t" style="left:552.5px;top:381.33px;font-size:14px;line-height:15.64px;color:#333;font-weight:normal;width:62.89999999999998px;text-align:center;">1</div>
<div class="t" style="left:615.4px;top:381.33px;font-size:14px;line-height:15.64px;color:#3c94fa;font-weight:normal;width:377.1px;text-align:center;">0x3CbFE0804086CEA09635171D454e09a675b3639a</div>
<div class="t" style="left:992.5px;top:381.33px;font-size:14px;line-height:15.64px;color:#333;font-weight:normal;width:50.0px;text-align:center;">erc</div>
<div class="t" style="left:1042.5px;top:381.33px;font-size:14px;line-height:15.64px;color:#333;font-weight:normal;width:90.0px;text-align:center;">0.000000</div>
<div class="t" style="left:1132.5px;top:381.33px;font-size:14px;line-height:15.64px;color:#333;font-weight:normal;width:88.0px;text-align:center;">qOkTB2</div>
<div class="t" style="left:1220.5px;top:380.83px;font-size:14px;line-height:15.64px;color:#3c94fa;font-weight:normal;width:73.0px;text-align:center;"><span class="ed">未授权</span></div>
<div class="t" style="left:1293.5px;top:380.83px;font-size:14px;line-height:15.64px;color:#3c94fa;font-weight:normal;width:91.0px;text-align:center;"><span class="ed">不控制</span></div>
<div class="t" style="left:1384.5px;top:380.83px;font-size:14px;line-height:15.64px;color:#3c94fa;font-weight:normal;width:76.79999999999995px;text-align:center;"><span class="ed">未实名</span></div>
<div class="t" style="left:1462.3px;top:381.33px;font-size:14px;line-height:15.64px;color:#333;font-weight:normal;width:77.10000000000014px;text-align:center;">-</div>
<div class="t" style="left:1539.4px;top:381.33px;font-size:14px;line-height:15.64px;color:#333;font-weight:normal;width:77.09999999999991px;text-align:center;">-</div>
<div class="t" style="left:1616.5px;top:381.33px;font-size:14px;line-height:15.64px;color:#333;font-weight:normal;width:76.90000000000009px;text-align:center;">-</div>
<div class="b" style="left:259px;top:458px;width:1672px;height:1px;background:#f1f1f1;"></div>
<div class="b cb" style="left:275px;top:427px;"></div>
<div class="t" style="left:303.5px;top:428.33px;font-size:14px;line-height:15.64px;color:#333;font-weight:normal;width:93.0px;text-align:center;">41720816</div>
<div class="t" style="left:396.5px;top:428.33px;font-size:14px;line-height:15.64px;color:#333;font-weight:normal;width:86.80000000000001px;text-align:center;">8021B9</div>
<div class="t" style="left:483.3px;top:428.33px;font-size:14px;line-height:15.64px;color:#333;font-weight:normal;width:69.19999999999999px;text-align:center;">admin</div>
<div class="t" style="left:552.5px;top:428.33px;font-size:14px;line-height:15.64px;color:#333;font-weight:normal;width:62.89999999999998px;text-align:center;">1</div>
<div class="t" style="left:615.4px;top:428.33px;font-size:14px;line-height:15.64px;color:#3c94fa;font-weight:normal;width:377.1px;text-align:center;">0xDFA7eaAEd9176ab57d939b31488Bae52388021B9</div>
<div class="t" style="left:992.5px;top:428.33px;font-size:14px;line-height:15.64px;color:#333;font-weight:normal;width:50.0px;text-align:center;">erc</div>
<div class="t" style="left:1042.5px;top:428.33px;font-size:14px;line-height:15.64px;color:#333;font-weight:normal;width:90.0px;text-align:center;">0.000000</div>
<div class="t" style="left:1132.5px;top:428.33px;font-size:14px;line-height:15.64px;color:#333;font-weight:normal;width:88.0px;text-align:center;">cH7aMj</div>
<div class="t" style="left:1220.5px;top:427.83px;font-size:14px;line-height:15.64px;color:#3c94fa;font-weight:normal;width:73.0px;text-align:center;"><span class="ed">未授权</span></div>
<div class="t" style="left:1293.5px;top:427.83px;font-size:14px;line-height:15.64px;color:#3c94fa;font-weight:normal;width:91.0px;text-align:center;"><span class="ed">不控制</span></div>
<div class="t" style="left:1384.5px;top:427.83px;font-size:14px;line-height:15.64px;color:#3c94fa;font-weight:normal;width:76.79999999999995px;text-align:center;"><span class="ed">未实名</span></div>
<div class="t" style="left:1462.3px;top:428.33px;font-size:14px;line-height:15.64px;color:#333;font-weight:normal;width:77.10000000000014px;text-align:center;">-</div>
<div class="t" style="left:1539.4px;top:428.33px;font-size:14px;line-height:15.64px;color:#333;font-weight:normal;width:77.09999999999991px;text-align:center;">-</div>
<div class="t" style="left:1616.5px;top:428.33px;font-size:14px;line-height:15.64px;color:#333;font-weight:normal;width:76.90000000000009px;text-align:center;">-</div>
<div class="b" style="left:259px;top:459px;width:1672px;height:46px;background:#f9f9f9;"></div>
<div class="b" style="left:259px;top:505px;width:1672px;height:1px;background:#f1f1f1;"></div>
<div class="b cb" style="left:275px;top:474px;"></div>
<div class="t" style="left:303.5px;top:475.33px;font-size:14px;line-height:15.64px;color:#333;font-weight:normal;width:93.0px;text-align:center;">41720815</div>
<div class="t" style="left:396.5px;top:475.33px;font-size:14px;line-height:15.64px;color:#333;font-weight:normal;width:86.80000000000001px;text-align:center;">9a5bFe</div>
<div class="t" style="left:483.3px;top:475.33px;font-size:14px;line-height:15.64px;color:#333;font-weight:normal;width:69.19999999999999px;text-align:center;">admin</div>
<div class="t" style="left:552.5px;top:475.33px;font-size:14px;line-height:15.64px;color:#333;font-weight:normal;width:62.89999999999998px;text-align:center;">1</div>
<div class="t" style="left:615.4px;top:475.33px;font-size:14px;line-height:15.64px;color:#3c94fa;font-weight:normal;width:377.1px;text-align:center;">0xFE83758d65968b2a97153F5e9265CC596E9a5bFe</div>
<div class="t" style="left:992.5px;top:475.33px;font-size:14px;line-height:15.64px;color:#333;font-weight:normal;width:50.0px;text-align:center;">erc</div>
<div class="t" style="left:1042.5px;top:475.33px;font-size:14px;line-height:15.64px;color:#333;font-weight:normal;width:90.0px;text-align:center;">0.000000</div>
<div class="t" style="left:1132.5px;top:475.33px;font-size:14px;line-height:15.64px;color:#333;font-weight:normal;width:88.0px;text-align:center;">klzw9b</div>
<div class="t" style="left:1220.5px;top:474.83px;font-size:14px;line-height:15.64px;color:#3c94fa;font-weight:normal;width:73.0px;text-align:center;"><span class="ed">未授权</span></div>
<div class="t" style="left:1293.5px;top:474.83px;font-size:14px;line-height:15.64px;color:#3c94fa;font-weight:normal;width:91.0px;text-align:center;"><span class="ed">不控制</span></div>
<div class="t" style="left:1384.5px;top:474.83px;font-size:14px;line-height:15.64px;color:#3c94fa;font-weight:normal;width:76.79999999999995px;text-align:center;"><span class="ed">未实名</span></div>
<div class="t" style="left:1462.3px;top:475.33px;font-size:14px;line-height:15.64px;color:#333;font-weight:normal;width:77.10000000000014px;text-align:center;">-</div>
<div class="t" style="left:1539.4px;top:475.33px;font-size:14px;line-height:15.64px;color:#333;font-weight:normal;width:77.09999999999991px;text-align:center;">-</div>
<div class="t" style="left:1616.5px;top:475.33px;font-size:14px;line-height:15.64px;color:#333;font-weight:normal;width:76.90000000000009px;text-align:center;">-</div>
<div class="b" style="left:259px;top:552px;width:1672px;height:1px;background:#f1f1f1;"></div>
<div class="b cb" style="left:275px;top:521px;"></div>
<div class="t" style="left:303.5px;top:522.33px;font-size:14px;line-height:15.64px;color:#333;font-weight:normal;width:93.0px;text-align:center;">41720814</div>
<div class="t" style="left:396.5px;top:522.33px;font-size:14px;line-height:15.64px;color:#333;font-weight:normal;width:86.80000000000001px;text-align:center;">cea598</div>
<div class="t" style="left:483.3px;top:522.33px;font-size:14px;line-height:15.64px;color:#333;font-weight:normal;width:69.19999999999999px;text-align:center;">admin</div>
<div class="t" style="left:552.5px;top:522.33px;font-size:14px;line-height:15.64px;color:#333;font-weight:normal;width:62.89999999999998px;text-align:center;">1</div>
<div class="t" style="left:615.4px;top:522.33px;font-size:14px;line-height:15.64px;color:#3c94fa;font-weight:normal;width:377.1px;text-align:center;">0x638986884B46b76Dc7a392912fDF15f1f7cea598</div>
<div class="t" style="left:992.5px;top:522.33px;font-size:14px;line-height:15.64px;color:#333;font-weight:normal;width:50.0px;text-align:center;">erc</div>
<div class="t" style="left:1042.5px;top:522.33px;font-size:14px;line-height:15.64px;color:#333;font-weight:normal;width:90.0px;text-align:center;">0.000000</div>
<div class="t" style="left:1132.5px;top:522.33px;font-size:14px;line-height:15.64px;color:#333;font-weight:normal;width:88.0px;text-align:center;">qNCHhm</div>
<div class="t" style="left:1220.5px;top:521.83px;font-size:14px;line-height:15.64px;color:#3c94fa;font-weight:normal;width:73.0px;text-align:center;"><span class="ed">未授权</span></div>
<div class="t" style="left:1293.5px;top:521.83px;font-size:14px;line-height:15.64px;color:#3c94fa;font-weight:normal;width:91.0px;text-align:center;"><span class="ed">不控制</span></div>
<div class="t" style="left:1384.5px;top:521.83px;font-size:14px;line-height:15.64px;color:#3c94fa;font-weight:normal;width:76.79999999999995px;text-align:center;"><span class="ed">未实名</span></div>
<div class="t" style="left:1462.3px;top:522.33px;font-size:14px;line-height:15.64px;color:#333;font-weight:normal;width:77.10000000000014px;text-align:center;">-</div>
<div class="t" style="left:1539.4px;top:522.33px;font-size:14px;line-height:15.64px;color:#333;font-weight:normal;width:77.09999999999991px;text-align:center;">-</div>
<div class="t" style="left:1616.5px;top:522.33px;font-size:14px;line-height:15.64px;color:#333;font-weight:normal;width:76.90000000000009px;text-align:center;">-</div>
<div class="b" style="left:259px;top:553px;width:1672px;height:46px;background:#f9f9f9;"></div>
<div class="b" style="left:259px;top:599px;width:1672px;height:1px;background:#f1f1f1;"></div>
<div class="b cb" style="left:275px;top:568px;"></div>
<div class="t" style="left:303.5px;top:569.33px;font-size:14px;line-height:15.64px;color:#333;font-weight:normal;width:93.0px;text-align:center;">41720813</div>
<div class="t" style="left:396.5px;top:569.33px;font-size:14px;line-height:15.64px;color:#333;font-weight:normal;width:86.80000000000001px;text-align:center;">F858E7</div>
<div class="t" style="left:483.3px;top:569.33px;font-size:14px;line-height:15.64px;color:#333;font-weight:normal;width:69.19999999999999px;text-align:center;">admin</div>
<div class="t" style="left:552.5px;top:569.33px;font-size:14px;line-height:15.64px;color:#333;font-weight:normal;width:62.89999999999998px;text-align:center;">1</div>
<div class="t" style="left:615.4px;top:569.33px;font-size:14px;line-height:15.64px;color:#3c94fa;font-weight:normal;width:377.1px;text-align:center;">0x3c2D5f2c29b9BDAf598af06264C72C872aF858E7</div>
<div class="t" style="left:992.5px;top:569.33px;font-size:14px;line-height:15.64px;color:#333;font-weight:normal;width:50.0px;text-align:center;">erc</div>
<div class="t" style="left:1042.5px;top:569.33px;font-size:14px;line-height:15.64px;color:#333;font-weight:normal;width:90.0px;text-align:center;">0.000000</div>
<div class="t" style="left:1132.5px;top:569.33px;font-size:14px;line-height:15.64px;color:#333;font-weight:normal;width:88.0px;text-align:center;">Zfb7Fe</div>
<div class="t" style="left:1220.5px;top:568.83px;font-size:14px;line-height:15.64px;color:#3c94fa;font-weight:normal;width:73.0px;text-align:center;"><span class="ed">未授权</span></div>
<div class="t" style="left:1293.5px;top:568.83px;font-size:14px;line-height:15.64px;color:#3c94fa;font-weight:normal;width:91.0px;text-align:center;"><span class="ed">不控制</span></div>
<div class="t" style="left:1384.5px;top:568.83px;font-size:14px;line-height:15.64px;color:#3c94fa;font-weight:normal;width:76.79999999999995px;text-align:center;"><span class="ed">未实名</span></div>
<div class="t" style="left:1462.3px;top:569.33px;font-size:14px;line-height:15.64px;color:#333;font-weight:normal;width:77.10000000000014px;text-align:center;">-</div>
<div class="t" style="left:1539.4px;top:569.33px;font-size:14px;line-height:15.64px;color:#333;font-weight:normal;width:77.09999999999991px;text-align:center;">-</div>
<div class="t" style="left:1616.5px;top:569.33px;font-size:14px;line-height:15.64px;color:#333;font-weight:normal;width:76.90000000000009px;text-align:center;">-</div>
<div class="b" style="left:259px;top:646px;width:1672px;height:1px;background:#f1f1f1;"></div>
<div class="b cb" style="left:275px;top:615px;"></div>
<div class="t" style="left:303.5px;top:616.33px;font-size:14px;line-height:15.64px;color:#333;font-weight:normal;width:93.0px;text-align:center;">41720812</div>
<div class="t" style="left:396.5px;top:616.33px;font-size:14px;line-height:15.64px;color:#333;font-weight:normal;width:86.80000000000001px;text-align:center;">BeF023</div>
<div class="t" style="left:483.3px;top:616.33px;font-size:14px;line-height:15.64px;color:#333;font-weight:normal;width:69.19999999999999px;text-align:center;">admin</div>
<div class="t" style="left:552.5px;top:616.33px;font-size:14px;line-height:15.64px;color:#333;font-weight:normal;width:62.89999999999998px;text-align:center;">1</div>
<div class="t" style="left:615.4px;top:616.33px;font-size:14px;line-height:15.64px;color:#3c94fa;font-weight:normal;width:377.1px;text-align:center;">0x3e3CE50a7805ECC9804814A6b13287a1D4BeF023</div>
<div class="t" style="left:992.5px;top:616.33px;font-size:14px;line-height:15.64px;color:#333;font-weight:normal;width:50.0px;text-align:center;">erc</div>
<div class="t" style="left:1042.5px;top:616.33px;font-size:14px;line-height:15.64px;color:#333;font-weight:normal;width:90.0px;text-align:center;">4.966140</div>
<div class="t" style="left:1132.5px;top:616.33px;font-size:14px;line-height:15.64px;color:#333;font-weight:normal;width:88.0px;text-align:center;">PSXkH2</div>
<div class="t" style="left:1220.5px;top:615.83px;font-size:14px;line-height:15.64px;color:#3c94fa;font-weight:normal;width:73.0px;text-align:center;"><span class="ed">未授权</span></div>
<div class="t" style="left:1293.5px;top:615.83px;font-size:14px;line-height:15.64px;color:#3c94fa;font-weight:normal;width:91.0px;text-align:center;"><span class="ed">不控制</span></div>
<div class="t" style="left:1384.5px;top:615.83px;font-size:14px;line-height:15.64px;color:#3c94fa;font-weight:normal;width:76.79999999999995px;text-align:center;"><span class="ed">未实名</span></div>
<div class="t" style="left:1462.3px;top:616.33px;font-size:14px;line-height:15.64px;color:#333;font-weight:normal;width:77.10000000000014px;text-align:center;">-</div>
<div class="t" style="left:1539.4px;top:616.33px;font-size:14px;line-height:15.64px;color:#333;font-weight:normal;width:77.09999999999991px;text-align:center;">-</div>
<div class="t" style="left:1616.5px;top:616.33px;font-size:14px;line-height:15.64px;color:#333;font-weight:normal;width:76.90000000000009px;text-align:center;">-</div>
<div class="b" style="left:259px;top:647px;width:1672px;height:46px;background:#f9f9f9;"></div>
<div class="b" style="left:259px;top:693px;width:1672px;height:1px;background:#f1f1f1;"></div>
<div class="b cb" style="left:275px;top:662px;"></div>
<div class="t" style="left:303.5px;top:663.33px;font-size:14px;line-height:15.64px;color:#333;font-weight:normal;width:93.0px;text-align:center;">41720811</div>
<div class="t" style="left:396.5px;top:663.33px;font-size:14px;line-height:15.64px;color:#333;font-weight:normal;width:86.80000000000001px;text-align:center;">7bBd4c</div>
<div class="t" style="left:483.3px;top:663.33px;font-size:14px;line-height:15.64px;color:#333;font-weight:normal;width:69.19999999999999px;text-align:center;">admin</div>
<div class="t" style="left:552.5px;top:663.33px;font-size:14px;line-height:15.64px;color:#333;font-weight:normal;width:62.89999999999998px;text-align:center;">1</div>
<div class="t" style="left:615.4px;top:663.33px;font-size:14px;line-height:15.64px;color:#3c94fa;font-weight:normal;width:377.1px;text-align:center;">0x65E9b9Fd48b3C78a204Cac3fA9aAbf07E97bBd4c</div>
<div class="t" style="left:992.5px;top:663.33px;font-size:14px;line-height:15.64px;color:#333;font-weight:normal;width:50.0px;text-align:center;">erc</div>
<div class="t" style="left:1042.5px;top:663.33px;font-size:14px;line-height:15.64px;color:#333;font-weight:normal;width:90.0px;text-align:center;">0.000000</div>
<div class="t" style="left:1132.5px;top:663.33px;font-size:14px;line-height:15.64px;color:#333;font-weight:normal;width:88.0px;text-align:center;">c9bSJj</div>
<div class="t" style="left:1220.5px;top:662.83px;font-size:14px;line-height:15.64px;color:#3c94fa;font-weight:normal;width:73.0px;text-align:center;"><span class="ed">未授权</span></div>
<div class="t" style="left:1293.5px;top:662.83px;font-size:14px;line-height:15.64px;color:#3c94fa;font-weight:normal;width:91.0px;text-align:center;"><span class="ed">不控制</span></div>
<div class="t" style="left:1384.5px;top:662.83px;font-size:14px;line-height:15.64px;color:#3c94fa;font-weight:normal;width:76.79999999999995px;text-align:center;"><span class="ed">未实名</span></div>
<div class="t" style="left:1462.3px;top:663.33px;font-size:14px;line-height:15.64px;color:#333;font-weight:normal;width:77.10000000000014px;text-align:center;">-</div>
<div class="t" style="left:1539.4px;top:663.33px;font-size:14px;line-height:15.64px;color:#333;font-weight:normal;width:77.09999999999991px;text-align:center;">-</div>
<div class="t" style="left:1616.5px;top:663.33px;font-size:14px;line-height:15.64px;color:#333;font-weight:normal;width:76.90000000000009px;text-align:center;">-</div>
<div class="b" style="left:259px;top:740px;width:1672px;height:1px;background:#f1f1f1;"></div>
<div class="b cb" style="left:275px;top:709px;"></div>
<div class="t" style="left:303.5px;top:710.33px;font-size:14px;line-height:15.64px;color:#333;font-weight:normal;width:93.0px;text-align:center;">41720810</div>
<div class="t" style="left:396.5px;top:710.33px;font-size:14px;line-height:15.64px;color:#333;font-weight:normal;width:86.80000000000001px;text-align:center;">8f7426</div>
<div class="t" style="left:483.3px;top:710.33px;font-size:14px;line-height:15.64px;color:#333;font-weight:normal;width:69.19999999999999px;text-align:center;">admin</div>
<div class="t" style="left:552.5px;top:710.33px;font-size:14px;line-height:15.64px;color:#333;font-weight:normal;width:62.89999999999998px;text-align:center;">1</div>
<div class="t" style="left:615.4px;top:710.33px;font-size:14px;line-height:15.64px;color:#3c94fa;font-weight:normal;width:377.1px;text-align:center;">0xbb49d9bB95d1aD0381a5E5D2AA3115e29c8f7426</div>
<div class="t" style="left:992.5px;top:710.33px;font-size:14px;line-height:15.64px;color:#333;font-weight:normal;width:50.0px;text-align:center;">erc</div>
<div class="t" style="left:1042.5px;top:710.33px;font-size:14px;line-height:15.64px;color:#333;font-weight:normal;width:90.0px;text-align:center;">0.000000</div>
<div class="t" style="left:1132.5px;top:710.33px;font-size:14px;line-height:15.64px;color:#333;font-weight:normal;width:88.0px;text-align:center;">gsvoW2</div>
<div class="t" style="left:1220.5px;top:709.83px;font-size:14px;line-height:15.64px;color:#3c94fa;font-weight:normal;width:73.0px;text-align:center;"><span class="ed">未授权</span></div>
<div class="t" style="left:1293.5px;top:709.83px;font-size:14px;line-height:15.64px;color:#3c94fa;font-weight:normal;width:91.0px;text-align:center;"><span class="ed">不控制</span></div>
<div class="t" style="left:1384.5px;top:709.83px;font-size:14px;line-height:15.64px;color:#3c94fa;font-weight:normal;width:76.79999999999995px;text-align:center;"><span class="ed">未实名</span></div>
<div class="t" style="left:1462.3px;top:710.33px;font-size:14px;line-height:15.64px;color:#333;font-weight:normal;width:77.10000000000014px;text-align:center;">-</div>
<div class="t" style="left:1539.4px;top:710.33px;font-size:14px;line-height:15.64px;color:#333;font-weight:normal;width:77.09999999999991px;text-align:center;">-</div>
<div class="t" style="left:1616.5px;top:710.33px;font-size:14px;line-height:15.64px;color:#333;font-weight:normal;width:76.90000000000009px;text-align:center;">-</div>
<div class="b" style="left:259px;top:741px;width:1672px;height:46px;background:#f9f9f9;"></div>
<div class="b" style="left:259px;top:787px;width:1672px;height:1px;background:#f1f1f1;"></div>
<div class="b cb" style="left:275px;top:756px;"></div>
<div class="t" style="left:303.5px;top:757.33px;font-size:14px;line-height:15.64px;color:#333;font-weight:normal;width:93.0px;text-align:center;">41720809</div>
<div class="t" style="left:396.5px;top:757.33px;font-size:14px;line-height:15.64px;color:#333;font-weight:normal;width:86.80000000000001px;text-align:center;">4Fe38A</div>
<div class="t" style="left:483.3px;top:757.33px;font-size:14px;line-height:15.64px;color:#333;font-weight:normal;width:69.19999999999999px;text-align:center;">admin</div>
<div class="t" style="left:552.5px;top:757.33px;font-size:14px;line-height:15.64px;color:#333;font-weight:normal;width:62.89999999999998px;text-align:center;">1</div>
<div class="t" style="left:615.4px;top:757.33px;font-size:14px;line-height:15.64px;color:#3c94fa;font-weight:normal;width:377.1px;text-align:center;">0x650Ea39C33Bbf2d8960de159AB92F1a2aF4Fe38A</div>
<div class="t" style="left:992.5px;top:757.33px;font-size:14px;line-height:15.64px;color:#333;font-weight:normal;width:50.0px;text-align:center;">erc</div>
<div class="t" style="left:1042.5px;top:757.33px;font-size:14px;line-height:15.64px;color:#333;font-weight:normal;width:90.0px;text-align:center;">0.000000</div>
<div class="t" style="left:1132.5px;top:757.33px;font-size:14px;line-height:15.64px;color:#333;font-weight:normal;width:88.0px;text-align:center;">9WaEn3</div>
<div class="t" style="left:1220.5px;top:756.83px;font-size:14px;line-height:15.64px;color:#3c94fa;font-weight:normal;width:73.0px;text-align:center;"><span class="ed">未授权</span></div>
<div class="t" style="left:1293.5px;top:756.83px;font-size:14px;line-height:15.64px;color:#3c94fa;font-weight:normal;width:91.0px;text-align:center;"><span class="ed">不控制</span></div>
<div class="t" style="left:1384.5px;top:756.83px;font-size:14px;line-height:15.64px;color:#3c94fa;font-weight:normal;width:76.79999999999995px;text-align:center;"><span class="ed">未实名</span></div>
<div class="t" style="left:1462.3px;top:757.33px;font-size:14px;line-height:15.64px;color:#333;font-weight:normal;width:77.10000000000014px;text-align:center;">-</div>
<div class="t" style="left:1539.4px;top:757.33px;font-size:14px;line-height:15.64px;color:#333;font-weight:normal;width:77.09999999999991px;text-align:center;">-</div>
<div class="t" style="left:1616.5px;top:757.33px;font-size:14px;line-height:15.64px;color:#333;font-weight:normal;width:76.90000000000009px;text-align:center;">-</div>
<div class="b" style="left:259px;top:834px;width:1672px;height:1px;background:#f1f1f1;"></div>
<div class="b cb" style="left:275px;top:803px;"></div>
<div class="t" style="left:303.5px;top:804.33px;font-size:14px;line-height:15.64px;color:#333;font-weight:normal;width:93.0px;text-align:center;">41720808</div>
<div class="t" style="left:396.5px;top:804.33px;font-size:14px;line-height:15.64px;color:#333;font-weight:normal;width:86.80000000000001px;text-align:center;">D68DDB</div>
<div class="t" style="left:483.3px;top:804.33px;font-size:14px;line-height:15.64px;color:#333;font-weight:normal;width:69.19999999999999px;text-align:center;">admin</div>
<div class="t" style="left:552.5px;top:804.33px;font-size:14px;line-height:15.64px;color:#333;font-weight:normal;width:62.89999999999998px;text-align:center;">1</div>
<div class="t" style="left:615.4px;top:804.33px;font-size:14px;line-height:15.64px;color:#3c94fa;font-weight:normal;width:377.1px;text-align:center;">0xDE26f5cAF102D105e635Ab8FE853DE210aD68DDB</div>
<div class="t" style="left:992.5px;top:804.33px;font-size:14px;line-height:15.64px;color:#333;font-weight:normal;width:50.0px;text-align:center;">erc</div>
<div class="t" style="left:1042.5px;top:804.33px;font-size:14px;line-height:15.64px;color:#333;font-weight:normal;width:90.0px;text-align:center;">0.000000</div>
<div class="t" style="left:1132.5px;top:804.33px;font-size:14px;line-height:15.64px;color:#333;font-weight:normal;width:88.0px;text-align:center;">LtvsGN</div>
<div class="t" style="left:1220.5px;top:803.83px;font-size:14px;line-height:15.64px;color:#3c94fa;font-weight:normal;width:73.0px;text-align:center;"><span class="ed">未授权</span></div>
<div class="t" style="left:1293.5px;top:803.83px;font-size:14px;line-height:15.64px;color:#3c94fa;font-weight:normal;width:91.0px;text-align:center;"><span class="ed">不控制</span></div>
<div class="t" style="left:1384.5px;top:803.83px;font-size:14px;line-height:15.64px;color:#3c94fa;font-weight:normal;width:76.79999999999995px;text-align:center;"><span class="ed">未实名</span></div>
<div class="t" style="left:1462.3px;top:804.33px;font-size:14px;line-height:15.64px;color:#333;font-weight:normal;width:77.10000000000014px;text-align:center;">-</div>
<div class="t" style="left:1539.4px;top:804.33px;font-size:14px;line-height:15.64px;color:#333;font-weight:normal;width:77.09999999999991px;text-align:center;">-</div>
<div class="t" style="left:1616.5px;top:804.33px;font-size:14px;line-height:15.64px;color:#333;font-weight:normal;width:76.90000000000009px;text-align:center;">-</div>
<div class="b" style="left:259px;top:323px;width:1672px;height:1px;background:#f0f0f0;"></div>
<div class="b" style="left:259px;top:364px;width:1672px;height:1px;background:#ddd;"></div>
<div class="b" style="left:259px;top:323px;width:1px;height:41px;background:#eee;"></div>
<div class="b" style="left:259px;top:364px;width:1px;height:470px;background:#f1f1f1;"></div>
<div class="b" style="left:303px;top:323px;width:1px;height:41px;background:#eee;"></div>
<div class="b" style="left:303px;top:364px;width:1px;height:470px;background:#f1f1f1;"></div>
<div class="b" style="left:396px;top:323px;width:1px;height:41px;background:#eee;"></div>
<div class="b" style="left:396px;top:364px;width:1px;height:470px;background:#f1f1f1;"></div>
<div class="b" style="left:483px;top:323px;width:1px;height:41px;background:#eee;"></div>
<div class="b" style="left:483px;top:364px;width:1px;height:470px;background:#f1f1f1;"></div>
<div class="b" style="left:552px;top:323px;width:1px;height:41px;background:#eee;"></div>
<div class="b" style="left:552px;top:364px;width:1px;height:470px;background:#f1f1f1;"></div>
<div class="b" style="left:615px;top:323px;width:1px;height:41px;background:#eee;"></div>
<div class="b" style="left:615px;top:364px;width:1px;height:470px;background:#f1f1f1;"></div>
<div class="b" style="left:992px;top:323px;width:1px;height:41px;background:#eee;"></div>
<div class="b" style="left:992px;top:364px;width:1px;height:470px;background:#f1f1f1;"></div>
<div class="b" style="left:1042px;top:323px;width:1px;height:41px;background:#eee;"></div>
<div class="b" style="left:1042px;top:364px;width:1px;height:470px;background:#f1f1f1;"></div>
<div class="b" style="left:1132px;top:323px;width:1px;height:41px;background:#eee;"></div>
<div class="b" style="left:1132px;top:364px;width:1px;height:470px;background:#f1f1f1;"></div>
<div class="b" style="left:1220px;top:323px;width:1px;height:41px;background:#eee;"></div>
<div class="b" style="left:1220px;top:364px;width:1px;height:470px;background:#f1f1f1;"></div>
<div class="b" style="left:1293px;top:323px;width:1px;height:41px;background:#eee;"></div>
<div class="b" style="left:1293px;top:364px;width:1px;height:470px;background:#f1f1f1;"></div>
<div class="b" style="left:1384px;top:323px;width:1px;height:41px;background:#eee;"></div>
<div class="b" style="left:1384px;top:364px;width:1px;height:470px;background:#f1f1f1;"></div>
<div class="b" style="left:1461px;top:323px;width:1px;height:41px;background:#eee;"></div>
<div class="b" style="left:1461px;top:364px;width:1px;height:470px;background:#f1f1f1;"></div>
<div class="b" style="left:1538px;top:323px;width:1px;height:41px;background:#eee;"></div>
<div class="b" style="left:1538px;top:364px;width:1px;height:470px;background:#f1f1f1;"></div>
<div class="b" style="left:1615px;top:323px;width:1px;height:41px;background:#eee;"></div>
<div class="b" style="left:1615px;top:364px;width:1px;height:470px;background:#f1f1f1;"></div>
<div class="b" style="left:1692px;top:323px;width:1px;height:41px;background:#eee;"></div>
<div class="b" style="left:1692px;top:364px;width:1px;height:470px;background:#f1f1f1;"></div>
<div class="b" style="left:1695px;top:323px;width:236px;height:512px;background:#fff;box-shadow:-1px 0 4px rgba(0,0,0,0.12);"></div>
<div class="b" style="left:1695px;top:323px;width:236px;height:1px;background:#eee;"></div>
<div class="b" style="left:1695px;top:364px;width:236px;height:1px;background:#ddd;"></div>
<div class="t" style="left:1695px;top:337.33px;font-size:14px;line-height:15.64px;color:#333;font-weight:bold;width:236px;text-align:center;">操作</div>
<div class="b" style="left:1695px;top:365px;width:236px;height:46px;background:#f4f4f4;"></div>
<div class="b" style="left:1695px;top:411px;width:236px;height:1px;background:#f1f1f1;"></div>
<div class="b" style="left:1711px;top:377px;width:74px;height:22px;background:#1889f0;border-radius:3px;box-shadow:inset 0 0 0 1px #0b7fe8;"></div>
<svg class="b" style="left:1716px;top:382px" width="12" height="12" viewBox="0 0 12 12"><path d="M1.5 10.5L10.5 2" stroke="#fff" stroke-width="2.8"/><path d="M8.3 3.6l1.6 1.6" stroke="#1889f0" stroke-width=".6"/><path d="M1 1.3l1.5 1.2L3.6 1 4.3 3" stroke="#fff" stroke-width="1.1" fill="none"/><path d="M10.3 5.6l1.3 1" stroke="#fff" stroke-width="1.2"/></svg>
<div class="t" style="left:1731px;top:381.14px;font-size:12px;line-height:13.40px;color:#fff;font-weight:normal;">更新余额</div>
<div class="b" style="left:1789px;top:377px;width:75px;height:22px;background:#f39c12;border-radius:3px;"></div>
<svg class="b" style="left:1795px;top:383px" width="12" height="10" viewBox="0 0 12 10"><path d="M.7 .7h4l1 1.3h5.6v7.3H.7z" fill="none" stroke="#fff" stroke-width="1.3"/></svg>
<div class="t" style="left:1810px;top:381.14px;font-size:12px;line-height:13.40px;color:#fff;font-weight:normal;">是否同步</div>
<div class="b" style="left:1868px;top:377px;width:22px;height:22px;background:#18bc9c;border-radius:3px;"></div>
<svg class="b" style="left:1873px;top:382px" width="12" height="12" viewBox="0 0 12 12"><path d="M8.5 .8l2.7 2.7L4 10.7H1.3V8z" fill="#fff"/><path d="M1.3 8l2.7 2.7" stroke="#18bc9c" stroke-width=".7"/></svg>
<div class="b" style="left:1894px;top:377px;width:21px;height:22px;background:#f75444;border-radius:3px;"></div>
<svg class="b" style="left:1899px;top:382px" width="11" height="11" viewBox="0 0 11 12"><path d="M0 2h11M3.5 2V.5h4V2" fill="none" stroke="#fff" stroke-width="1.2"/><path d="M1.2 3h8.6L9 12H2z" fill="#fff"/><path d="M3.7 4.5v6M5.5 4.5v6M7.3 4.5v6" stroke="#f75444" stroke-width=".8"/></svg>
<div class="b" style="left:1695px;top:458px;width:236px;height:1px;background:#f1f1f1;"></div>
<div class="b" style="left:1711px;top:424px;width:74px;height:22px;background:#1889f0;border-radius:3px;box-shadow:inset 0 0 0 1px #0b7fe8;"></div>
<svg class="b" style="left:1716px;top:429px" width="12" height="12" viewBox="0 0 12 12"><path d="M1.5 10.5L10.5 2" stroke="#fff" stroke-width="2.8"/><path d="M8.3 3.6l1.6 1.6" stroke="#1889f0" stroke-width=".6"/><path d="M1 1.3l1.5 1.2L3.6 1 4.3 3" stroke="#fff" stroke-width="1.1" fill="none"/><path d="M10.3 5.6l1.3 1" stroke="#fff" stroke-width="1.2"/></svg>
<div class="t" style="left:1731px;top:428.14px;font-size:12px;line-height:13.40px;color:#fff;font-weight:normal;">更新余额</div>
<div class="b" style="left:1789px;top:424px;width:75px;height:22px;background:#f39c12;border-radius:3px;"></div>
<svg class="b" style="left:1795px;top:430px" width="12" height="10" viewBox="0 0 12 10"><path d="M.7 .7h4l1 1.3h5.6v7.3H.7z" fill="none" stroke="#fff" stroke-width="1.3"/></svg>
<div class="t" style="left:1810px;top:428.14px;font-size:12px;line-height:13.40px;color:#fff;font-weight:normal;">是否同步</div>
<div class="b" style="left:1868px;top:424px;width:22px;height:22px;background:#18bc9c;border-radius:3px;"></div>
<svg class="b" style="left:1873px;top:429px" width="12" height="12" viewBox="0 0 12 12"><path d="M8.5 .8l2.7 2.7L4 10.7H1.3V8z" fill="#fff"/><path d="M1.3 8l2.7 2.7" stroke="#18bc9c" stroke-width=".7"/></svg>
<div class="b" style="left:1894px;top:424px;width:21px;height:22px;background:#f75444;border-radius:3px;"></div>
<svg class="b" style="left:1899px;top:429px" width="11" height="11" viewBox="0 0 11 12"><path d="M0 2h11M3.5 2V.5h4V2" fill="none" stroke="#fff" stroke-width="1.2"/><path d="M1.2 3h8.6L9 12H2z" fill="#fff"/><path d="M3.7 4.5v6M5.5 4.5v6M7.3 4.5v6" stroke="#f75444" stroke-width=".8"/></svg>
<div class="b" style="left:1695px;top:459px;width:236px;height:46px;background:#f9f9f9;"></div>
<div class="b" style="left:1695px;top:505px;width:236px;height:1px;background:#f1f1f1;"></div>
<div class="b" style="left:1711px;top:471px;width:74px;height:22px;background:#1889f0;border-radius:3px;box-shadow:inset 0 0 0 1px #0b7fe8;"></div>
<svg class="b" style="left:1716px;top:476px" width="12" height="12" viewBox="0 0 12 12"><path d="M1.5 10.5L10.5 2" stroke="#fff" stroke-width="2.8"/><path d="M8.3 3.6l1.6 1.6" stroke="#1889f0" stroke-width=".6"/><path d="M1 1.3l1.5 1.2L3.6 1 4.3 3" stroke="#fff" stroke-width="1.1" fill="none"/><path d="M10.3 5.6l1.3 1" stroke="#fff" stroke-width="1.2"/></svg>
<div class="t" style="left:1731px;top:475.14px;font-size:12px;line-height:13.40px;color:#fff;font-weight:normal;">更新余额</div>
<div class="b" style="left:1789px;top:471px;width:75px;height:22px;background:#f39c12;border-radius:3px;"></div>
<svg class="b" style="left:1795px;top:477px" width="12" height="10" viewBox="0 0 12 10"><path d="M.7 .7h4l1 1.3h5.6v7.3H.7z" fill="none" stroke="#fff" stroke-width="1.3"/></svg>
<div class="t" style="left:1810px;top:475.14px;font-size:12px;line-height:13.40px;color:#fff;font-weight:normal;">是否同步</div>
<div class="b" style="left:1868px;top:471px;width:22px;height:22px;background:#18bc9c;border-radius:3px;"></div>
<svg class="b" style="left:1873px;top:476px" width="12" height="12" viewBox="0 0 12 12"><path d="M8.5 .8l2.7 2.7L4 10.7H1.3V8z" fill="#fff"/><path d="M1.3 8l2.7 2.7" stroke="#18bc9c" stroke-width=".7"/></svg>
<div class="b" style="left:1894px;top:471px;width:21px;height:22px;background:#f75444;border-radius:3px;"></div>
<svg class="b" style="left:1899px;top:476px" width="11" height="11" viewBox="0 0 11 12"><path d="M0 2h11M3.5 2V.5h4V2" fill="none" stroke="#fff" stroke-width="1.2"/><path d="M1.2 3h8.6L9 12H2z" fill="#fff"/><path d="M3.7 4.5v6M5.5 4.5v6M7.3 4.5v6" stroke="#f75444" stroke-width=".8"/></svg>
<div class="b" style="left:1695px;top:552px;width:236px;height:1px;background:#f1f1f1;"></div>
<div class="b" style="left:1711px;top:518px;width:74px;height:22px;background:#1889f0;border-radius:3px;box-shadow:inset 0 0 0 1px #0b7fe8;"></div>
<svg class="b" style="left:1716px;top:523px" width="12" height="12" viewBox="0 0 12 12"><path d="M1.5 10.5L10.5 2" stroke="#fff" stroke-width="2.8"/><path d="M8.3 3.6l1.6 1.6" stroke="#1889f0" stroke-width=".6"/><path d="M1 1.3l1.5 1.2L3.6 1 4.3 3" stroke="#fff" stroke-width="1.1" fill="none"/><path d="M10.3 5.6l1.3 1" stroke="#fff" stroke-width="1.2"/></svg>
<div class="t" style="left:1731px;top:522.14px;font-size:12px;line-height:13.40px;color:#fff;font-weight:normal;">更新余额</div>
<div class="b" style="left:1789px;top:518px;width:75px;height:22px;background:#f39c12;border-radius:3px;"></div>
<svg class="b" style="left:1795px;top:524px" width="12" height="10" viewBox="0 0 12 10"><path d="M.7 .7h4l1 1.3h5.6v7.3H.7z" fill="none" stroke="#fff" stroke-width="1.3"/></svg>
<div class="t" style="left:1810px;top:522.14px;font-size:12px;line-height:13.40px;color:#fff;font-weight:normal;">是否同步</div>
<div class="b" style="left:1868px;top:518px;width:22px;height:22px;background:#18bc9c;border-radius:3px;"></div>
<svg class="b" style="left:1873px;top:523px" width="12" height="12" viewBox="0 0 12 12"><path d="M8.5 .8l2.7 2.7L4 10.7H1.3V8z" fill="#fff"/><path d="M1.3 8l2.7 2.7" stroke="#18bc9c" stroke-width=".7"/></svg>
<div class="b" style="left:1894px;top:518px;width:21px;height:22px;background:#f75444;border-radius:3px;"></div>
<svg class="b" style="left:1899px;top:523px" width="11" height="11" viewBox="0 0 11 12"><path d="M0 2h11M3.5 2V.5h4V2" fill="none" stroke="#fff" stroke-width="1.2"/><path d="M1.2 3h8.6L9 12H2z" fill="#fff"/><path d="M3.7 4.5v6M5.5 4.5v6M7.3 4.5v6" stroke="#f75444" stroke-width=".8"/></svg>
<div class="b" style="left:1695px;top:553px;width:236px;height:46px;background:#f9f9f9;"></div>
<div class="b" style="left:1695px;top:599px;width:236px;height:1px;background:#f1f1f1;"></div>
<div class="b" style="left:1711px;top:565px;width:74px;height:22px;background:#1889f0;border-radius:3px;box-shadow:inset 0 0 0 1px #0b7fe8;"></div>
<svg class="b" style="left:1716px;top:570px" width="12" height="12" viewBox="0 0 12 12"><path d="M1.5 10.5L10.5 2" stroke="#fff" stroke-width="2.8"/><path d="M8.3 3.6l1.6 1.6" stroke="#1889f0" stroke-width=".6"/><path d="M1 1.3l1.5 1.2L3.6 1 4.3 3" stroke="#fff" stroke-width="1.1" fill="none"/><path d="M10.3 5.6l1.3 1" stroke="#fff" stroke-width="1.2"/></svg>
<div class="t" style="left:1731px;top:569.14px;font-size:12px;line-height:13.40px;color:#fff;font-weight:normal;">更新余额</div>
<div class="b" style="left:1789px;top:565px;width:75px;height:22px;background:#f39c12;border-radius:3px;"></div>
<svg class="b" style="left:1795px;top:571px" width="12" height="10" viewBox="0 0 12 10"><path d="M.7 .7h4l1 1.3h5.6v7.3H.7z" fill="none" stroke="#fff" stroke-width="1.3"/></svg>
<div class="t" style="left:1810px;top:569.14px;font-size:12px;line-height:13.40px;color:#fff;font-weight:normal;">是否同步</div>
<div class="b" style="left:1868px;top:565px;width:22px;height:22px;background:#18bc9c;border-radius:3px;"></div>
<svg class="b" style="left:1873px;top:570px" width="12" height="12" viewBox="0 0 12 12"><path d="M8.5 .8l2.7 2.7L4 10.7H1.3V8z" fill="#fff"/><path d="M1.3 8l2.7 2.7" stroke="#18bc9c" stroke-width=".7"/></svg>
<div class="b" style="left:1894px;top:565px;width:21px;height:22px;background:#f75444;border-radius:3px;"></div>
<svg class="b" style="left:1899px;top:570px" width="11" height="11" viewBox="0 0 11 12"><path d="M0 2h11M3.5 2V.5h4V2" fill="none" stroke="#fff" stroke-width="1.2"/><path d="M1.2 3h8.6L9 12H2z" fill="#fff"/><path d="M3.7 4.5v6M5.5 4.5v6M7.3 4.5v6" stroke="#f75444" stroke-width=".8"/></svg>
<div class="b" style="left:1695px;top:646px;width:236px;height:1px;background:#f1f1f1;"></div>
<div class="b" style="left:1711px;top:612px;width:74px;height:22px;background:#1889f0;border-radius:3px;box-shadow:inset 0 0 0 1px #0b7fe8;"></div>
<svg class="b" style="left:1716px;top:617px" width="12" height="12" viewBox="0 0 12 12"><path d="M1.5 10.5L10.5 2" stroke="#fff" stroke-width="2.8"/><path d="M8.3 3.6l1.6 1.6" stroke="#1889f0" stroke-width=".6"/><path d="M1 1.3l1.5 1.2L3.6 1 4.3 3" stroke="#fff" stroke-width="1.1" fill="none"/><path d="M10.3 5.6l1.3 1" stroke="#fff" stroke-width="1.2"/></svg>
<div class="t" style="left:1731px;top:616.14px;font-size:12px;line-height:13.40px;color:#fff;font-weight:normal;">更新余额</div>
<div class="b" style="left:1789px;top:612px;width:75px;height:22px;background:#f39c12;border-radius:3px;"></div>
<svg class="b" style="left:1795px;top:618px" width="12" height="10" viewBox="0 0 12 10"><path d="M.7 .7h4l1 1.3h5.6v7.3H.7z" fill="none" stroke="#fff" stroke-width="1.3"/></svg>
<div class="t" style="left:1810px;top:616.14px;font-size:12px;line-height:13.40px;color:#fff;font-weight:normal;">是否同步</div>
<div class="b" style="left:1868px;top:612px;width:22px;height:22px;background:#18bc9c;border-radius:3px;"></div>
<svg class="b" style="left:1873px;top:617px" width="12" height="12" viewBox="0 0 12 12"><path d="M8.5 .8l2.7 2.7L4 10.7H1.3V8z" fill="#fff"/><path d="M1.3 8l2.7 2.7" stroke="#18bc9c" stroke-width=".7"/></svg>
<div class="b" style="left:1894px;top:612px;width:21px;height:22px;background:#f75444;border-radius:3px;"></div>
<svg class="b" style="left:1899px;top:617px" width="11" height="11" viewBox="0 0 11 12"><path d="M0 2h11M3.5 2V.5h4V2" fill="none" stroke="#fff" stroke-width="1.2"/><path d="M1.2 3h8.6L9 12H2z" fill="#fff"/><path d="M3.7 4.5v6M5.5 4.5v6M7.3 4.5v6" stroke="#f75444" stroke-width=".8"/></svg>
<div class="b" style="left:1695px;top:647px;width:236px;height:46px;background:#f9f9f9;"></div>
<div class="b" style="left:1695px;top:693px;width:236px;height:1px;background:#f1f1f1;"></div>
<div class="b" style="left:1711px;top:659px;width:74px;height:22px;background:#1889f0;border-radius:3px;box-shadow:inset 0 0 0 1px #0b7fe8;"></div>
<svg class="b" style="left:1716px;top:664px" width="12" height="12" viewBox="0 0 12 12"><path d="M1.5 10.5L10.5 2" stroke="#fff" stroke-width="2.8"/><path d="M8.3 3.6l1.6 1.6" stroke="#1889f0" stroke-width=".6"/><path d="M1 1.3l1.5 1.2L3.6 1 4.3 3" stroke="#fff" stroke-width="1.1" fill="none"/><path d="M10.3 5.6l1.3 1" stroke="#fff" stroke-width="1.2"/></svg>
<div class="t" style="left:1731px;top:663.14px;font-size:12px;line-height:13.40px;color:#fff;font-weight:normal;">更新余额</div>
<div class="b" style="left:1789px;top:659px;width:75px;height:22px;background:#f39c12;border-radius:3px;"></div>
<svg class="b" style="left:1795px;top:665px" width="12" height="10" viewBox="0 0 12 10"><path d="M.7 .7h4l1 1.3h5.6v7.3H.7z" fill="none" stroke="#fff" stroke-width="1.3"/></svg>
<div class="t" style="left:1810px;top:663.14px;font-size:12px;line-height:13.40px;color:#fff;font-weight:normal;">是否同步</div>
<div class="b" style="left:1868px;top:659px;width:22px;height:22px;background:#18bc9c;border-radius:3px;"></div>
<svg class="b" style="left:1873px;top:664px" width="12" height="12" viewBox="0 0 12 12"><path d="M8.5 .8l2.7 2.7L4 10.7H1.3V8z" fill="#fff"/><path d="M1.3 8l2.7 2.7" stroke="#18bc9c" stroke-width=".7"/></svg>
<div class="b" style="left:1894px;top:659px;width:21px;height:22px;background:#f75444;border-radius:3px;"></div>
<svg class="b" style="left:1899px;top:664px" width="11" height="11" viewBox="0 0 11 12"><path d="M0 2h11M3.5 2V.5h4V2" fill="none" stroke="#fff" stroke-width="1.2"/><path d="M1.2 3h8.6L9 12H2z" fill="#fff"/><path d="M3.7 4.5v6M5.5 4.5v6M7.3 4.5v6" stroke="#f75444" stroke-width=".8"/></svg>
<div class="b" style="left:1695px;top:740px;width:236px;height:1px;background:#f1f1f1;"></div>
<div class="b" style="left:1711px;top:706px;width:74px;height:22px;background:#1889f0;border-radius:3px;box-shadow:inset 0 0 0 1px #0b7fe8;"></div>
<svg class="b" style="left:1716px;top:711px" width="12" height="12" viewBox="0 0 12 12"><path d="M1.5 10.5L10.5 2" stroke="#fff" stroke-width="2.8"/><path d="M8.3 3.6l1.6 1.6" stroke="#1889f0" stroke-width=".6"/><path d="M1 1.3l1.5 1.2L3.6 1 4.3 3" stroke="#fff" stroke-width="1.1" fill="none"/><path d="M10.3 5.6l1.3 1" stroke="#fff" stroke-width="1.2"/></svg>
<div class="t" style="left:1731px;top:710.14px;font-size:12px;line-height:13.40px;color:#fff;font-weight:normal;">更新余额</div>
<div class="b" style="left:1789px;top:706px;width:75px;height:22px;background:#f39c12;border-radius:3px;"></div>
<svg class="b" style="left:1795px;top:712px" width="12" height="10" viewBox="0 0 12 10"><path d="M.7 .7h4l1 1.3h5.6v7.3H.7z" fill="none" stroke="#fff" stroke-width="1.3"/></svg>
<div class="t" style="left:1810px;top:710.14px;font-size:12px;line-height:13.40px;color:#fff;font-weight:normal;">是否同步</div>
<div class="b" style="left:1868px;top:706px;width:22px;height:22px;background:#18bc9c;border-radius:3px;"></div>
<svg class="b" style="left:1873px;top:711px" width="12" height="12" viewBox="0 0 12 12"><path d="M8.5 .8l2.7 2.7L4 10.7H1.3V8z" fill="#fff"/><path d="M1.3 8l2.7 2.7" stroke="#18bc9c" stroke-width=".7"/></svg>
<div class="b" style="left:1894px;top:706px;width:21px;height:22px;background:#f75444;border-radius:3px;"></div>
<svg class="b" style="left:1899px;top:711px" width="11" height="11" viewBox="0 0 11 12"><path d="M0 2h11M3.5 2V.5h4V2" fill="none" stroke="#fff" stroke-width="1.2"/><path d="M1.2 3h8.6L9 12H2z" fill="#fff"/><path d="M3.7 4.5v6M5.5 4.5v6M7.3 4.5v6" stroke="#f75444" stroke-width=".8"/></svg>
<div class="b" style="left:1695px;top:741px;width:236px;height:46px;background:#f9f9f9;"></div>
<div class="b" style="left:1695px;top:787px;width:236px;height:1px;background:#f1f1f1;"></div>
<div class="b" style="left:1711px;top:753px;width:74px;height:22px;background:#1889f0;border-radius:3px;box-shadow:inset 0 0 0 1px #0b7fe8;"></div>
<svg class="b" style="left:1716px;top:758px" width="12" height="12" viewBox="0 0 12 12"><path d="M1.5 10.5L10.5 2" stroke="#fff" stroke-width="2.8"/><path d="M8.3 3.6l1.6 1.6" stroke="#1889f0" stroke-width=".6"/><path d="M1 1.3l1.5 1.2L3.6 1 4.3 3" stroke="#fff" stroke-width="1.1" fill="none"/><path d="M10.3 5.6l1.3 1" stroke="#fff" stroke-width="1.2"/></svg>
<div class="t" style="left:1731px;top:757.14px;font-size:12px;line-height:13.40px;color:#fff;font-weight:normal;">更新余额</div>
<div class="b" style="left:1789px;top:753px;width:75px;height:22px;background:#f39c12;border-radius:3px;"></div>
<svg class="b" style="left:1795px;top:759px" width="12" height="10" viewBox="0 0 12 10"><path d="M.7 .7h4l1 1.3h5.6v7.3H.7z" fill="none" stroke="#fff" stroke-width="1.3"/></svg>
<div class="t" style="left:1810px;top:757.14px;font-size:12px;line-height:13.40px;color:#fff;font-weight:normal;">是否同步</div>
<div class="b" style="left:1868px;top:753px;width:22px;height:22px;background:#18bc9c;border-radius:3px;"></div>
<svg class="b" style="left:1873px;top:758px" width="12" height="12" viewBox="0 0 12 12"><path d="M8.5 .8l2.7 2.7L4 10.7H1.3V8z" fill="#fff"/><path d="M1.3 8l2.7 2.7" stroke="#18bc9c" stroke-width=".7"/></svg>
<div class="b" style="left:1894px;top:753px;width:21px;height:22px;background:#f75444;border-radius:3px;"></div>
<svg class="b" style="left:1899px;top:758px" width="11" height="11" viewBox="0 0 11 12"><path d="M0 2h11M3.5 2V.5h4V2" fill="none" stroke="#fff" stroke-width="1.2"/><path d="M1.2 3h8.6L9 12H2z" fill="#fff"/><path d="M3.7 4.5v6M5.5 4.5v6M7.3 4.5v6" stroke="#f75444" stroke-width=".8"/></svg>
<div class="b" style="left:1695px;top:834px;width:236px;height:1px;background:#f1f1f1;"></div>
<div class="b" style="left:1711px;top:800px;width:74px;height:22px;background:#1889f0;border-radius:3px;box-shadow:inset 0 0 0 1px #0b7fe8;"></div>
<svg class="b" style="left:1716px;top:805px" width="12" height="12" viewBox="0 0 12 12"><path d="M1.5 10.5L10.5 2" stroke="#fff" stroke-width="2.8"/><path d="M8.3 3.6l1.6 1.6" stroke="#1889f0" stroke-width=".6"/><path d="M1 1.3l1.5 1.2L3.6 1 4.3 3" stroke="#fff" stroke-width="1.1" fill="none"/><path d="M10.3 5.6l1.3 1" stroke="#fff" stroke-width="1.2"/></svg>
<div class="t" style="left:1731px;top:804.14px;font-size:12px;line-height:13.40px;color:#fff;font-weight:normal;">更新余额</div>
<div class="b" style="left:1789px;top:800px;width:75px;height:22px;background:#f39c12;border-radius:3px;"></div>
<svg class="b" style="left:1795px;top:806px" width="12" height="10" viewBox="0 0 12 10"><path d="M.7 .7h4l1 1.3h5.6v7.3H.7z" fill="none" stroke="#fff" stroke-width="1.3"/></svg>
<div class="t" style="left:1810px;top:804.14px;font-size:12px;line-height:13.40px;color:#fff;font-weight:normal;">是否同步</div>
<div class="b" style="left:1868px;top:800px;width:22px;height:22px;background:#18bc9c;border-radius:3px;"></div>
<svg class="b" style="left:1873px;top:805px" width="12" height="12" viewBox="0 0 12 12"><path d="M8.5 .8l2.7 2.7L4 10.7H1.3V8z" fill="#fff"/><path d="M1.3 8l2.7 2.7" stroke="#18bc9c" stroke-width=".7"/></svg>
<div class="b" style="left:1894px;top:800px;width:21px;height:22px;background:#f75444;border-radius:3px;"></div>
<svg class="b" style="left:1899px;top:805px" width="11" height="11" viewBox="0 0 11 12"><path d="M0 2h11M3.5 2V.5h4V2" fill="none" stroke="#fff" stroke-width="1.2"/><path d="M1.2 3h8.6L9 12H2z" fill="#fff"/><path d="M3.7 4.5v6M5.5 4.5v6M7.3 4.5v6" stroke="#f75444" stroke-width=".8"/></svg>
<div class="b" style="left:259px;top:835px;width:1672px;height:15px;background:#fafafa;"></div>
<svg class="b" style="left:263px;top:838px" width="8" height="9" viewBox="0 0 8 9"><path d="M7.5 0v9L0 4.5z" fill="#8a8a8a"/></svg>
<svg class="b" style="left:1919px;top:838px" width="8" height="9" viewBox="0 0 8 9"><path d="M.5 0v9L8 4.5z" fill="#8a8a8a"/></svg>
<div class="b" style="left:277px;top:838px;width:92px;height:9px;background:#8a8a8a;border-radius:5px;width:1092px;"></div>
<div class="t" style="left:259.4px;top:870.33px;font-size:14px;line-height:15.64px;color:#333;font-weight:normal;">显示第 1 到第 10 条记录，总共 12 条记录 每页显示</div>
<div class="b" style="left:582px;top:862px;width:52px;height:33px;background:#f4f4f4;border:1px solid #ddd;border-radius:3px;box-sizing:border-box;"></div>
<div class="t" style="left:596px;top:870.24px;font-size:13px;line-height:14.52px;color:#333;font-weight:normal;">10</div>
<svg class="b" style="left:613px;top:875px" width="8" height="5" viewBox="0 0 8 5"><path d="M0 4.5h8L4 0z" fill="#333"/></svg>
<div class="t" style="left:639px;top:870.33px;font-size:14px;line-height:15.64px;color:#333;font-weight:normal;">条记录</div>
<div class="b" style="left:1618px;top:860px;width:201px;height:34px;background:#fafafa;border:1px solid #ddd;border-radius:3px;box-sizing:border-box;"></div>
<div class="b" style="left:1685px;top:860px;width:34px;height:34px;background:#444c69;"></div>
<div class="b" style="left:1751px;top:861px;width:1px;height:32px;background:#ddd;"></div>
<div class="t" style="left:1618px;top:870.33px;font-size:14px;line-height:15.64px;color:#666;font-weight:normal;width:67px;text-align:center;">上一页</div>
<div class="t" style="left:1685px;top:870.33px;font-size:14px;line-height:15.64px;color:#fff;font-weight:normal;width:34px;text-align:center;">1</div>
<div class="t" style="left:1719px;top:870.33px;font-size:14px;line-height:15.64px;color:#666;font-weight:normal;width:32.5px;text-align:center;">2</div>
<div class="t" style="left:1751.5px;top:870.33px;font-size:14px;line-height:15.64px;color:#666;font-weight:normal;width:67px;text-align:center;">下一页</div>
<div class="b" style="left:1824px;top:860px;width:50px;height:33px;border:1px solid #d2d6de;box-sizing:border-box;background:#fff;"></div>
<div class="b" style="left:1879px;top:861px;width:52px;height:33px;background:#f4f4f4;border:1px solid #ddd;border-radius:3px;box-sizing:border-box;"></div>
<div class="t" style="left:1879px;top:870.24px;font-size:13px;line-height:14.52px;color:#444;font-weight:normal;width:52px;text-align:center;">跳转</div>
<svg class="b" style="left:0;top:0" width="1956" height="1098" viewBox="0 0 1956 1098">
<circle cx="978.6" cy="549.0" r="139.5" fill="none" stroke="#f00" stroke-width="5.2"/>
<text x="873.67" y="569.97" transform="rotate(258.70 873.67 569.97)" text-anchor="middle" font-family="Liberation Sans" font-weight="bold" font-size="26" fill="#f00">w</text>
<text x="871.96" y="540.23" transform="rotate(274.70 871.96 540.23)" text-anchor="middle" font-family="Liberation Sans" font-weight="bold" font-size="26" fill="#f00">w</text>
<text x="878.51" y="511.18" transform="rotate(290.70 878.51 511.18)" text-anchor="middle" font-family="Liberation Sans" font-weight="bold" font-size="26" fill="#f00">w</text>
<text x="892.81" y="485.05" transform="rotate(306.70 892.81 485.05)" text-anchor="middle" font-family="Liberation Sans" font-weight="bold" font-size="26" fill="#f00">.</text>
<text x="913.76" y="463.88" transform="rotate(322.70 913.76 463.88)" text-anchor="middle" font-family="Liberation Sans" font-weight="bold" font-size="26" fill="#f00">5</text>
<text x="939.73" y="449.31" transform="rotate(338.70 939.73 449.31)" text-anchor="middle" font-family="Liberation Sans" font-weight="bold" font-size="26" fill="#f00">1</text>
<text x="968.72" y="442.46" transform="rotate(354.70 968.72 442.46)" text-anchor="middle" font-family="Liberation Sans" font-weight="bold" font-size="26" fill="#f00">5</text>
<text x="998.47" y="443.86" transform="rotate(370.70 998.47 443.86)" text-anchor="middle" font-family="Liberation Sans" font-weight="bold" font-size="26" fill="#f00">y</text>
<text x="1026.68" y="453.41" transform="rotate(386.70 1026.68 453.41)" text-anchor="middle" font-family="Liberation Sans" font-weight="bold" font-size="26" fill="#f00">m</text>
<text x="1051.16" y="470.36" transform="rotate(402.70 1051.16 470.36)" text-anchor="middle" font-family="Liberation Sans" font-weight="bold" font-size="26" fill="#f00">.</text>
<text x="1070.03" y="493.41" transform="rotate(418.70 1070.03 493.41)" text-anchor="middle" font-family="Liberation Sans" font-weight="bold" font-size="26" fill="#f00">c</text>
<text x="1081.81" y="520.77" transform="rotate(434.70 1081.81 520.77)" text-anchor="middle" font-family="Liberation Sans" font-weight="bold" font-size="26" fill="#f00">o</text>
<text x="1085.59" y="550.31" transform="rotate(450.70 1085.59 550.31)" text-anchor="middle" font-family="Liberation Sans" font-weight="bold" font-size="26" fill="#f00">m</text>
<text x="915.69" y="663.91" transform="rotate(28.70 915.69 663.91)" text-anchor="middle" font-family="Liberation Mono" font-size="14" fill="#f00">5</text>
<text x="929.63" y="670.50" transform="rotate(21.95 929.63 670.50)" text-anchor="middle" font-family="Liberation Mono" font-size="14" fill="#f00">1</text>
<text x="944.25" y="675.42" transform="rotate(15.20 944.25 675.42)" text-anchor="middle" font-family="Liberation Mono" font-size="14" fill="#f00">5</text>
<text x="959.35" y="678.58" transform="rotate(8.45 959.35 678.58)" text-anchor="middle" font-family="Liberation Mono" font-size="14" fill="#f00">y</text>
<text x="974.71" y="679.94" transform="rotate(1.70 974.71 679.94)" text-anchor="middle" font-family="Liberation Mono" font-size="14" fill="#f00">m</text>
<text x="990.13" y="679.49" transform="rotate(-5.05 990.13 679.49)" text-anchor="middle" font-family="Liberation Mono" font-size="14" fill="#f00">.</text>
<text x="1005.39" y="677.23" transform="rotate(-11.80 1005.39 677.23)" text-anchor="middle" font-family="Liberation Mono" font-size="14" fill="#f00">c</text>
<text x="1020.28" y="673.19" transform="rotate(-18.55 1020.28 673.19)" text-anchor="middle" font-family="Liberation Mono" font-size="14" fill="#f00">o</text>
<text x="1034.58" y="667.43" transform="rotate(-25.30 1034.58 667.43)" text-anchor="middle" font-family="Liberation Mono" font-size="14" fill="#f00">m</text>
<text x="904.5" y="562.6" font-family="Liberation Sans" font-size="38" fill="#f00" stroke="#f00" stroke-width="0.8">515</text>
<text x="975" y="561" font-family="Liberation Serif" font-size="37" fill="#f00" stroke="#f00" stroke-width="0.9" letter-spacing="1">源码</text>
<text x="902.6" y="629" font-family="Liberation Mono" font-weight="bold" font-size="28.5" fill="#f00" stroke="#f00" stroke-width="0.3">515ym.com</text>
</svg>
</body></html>
